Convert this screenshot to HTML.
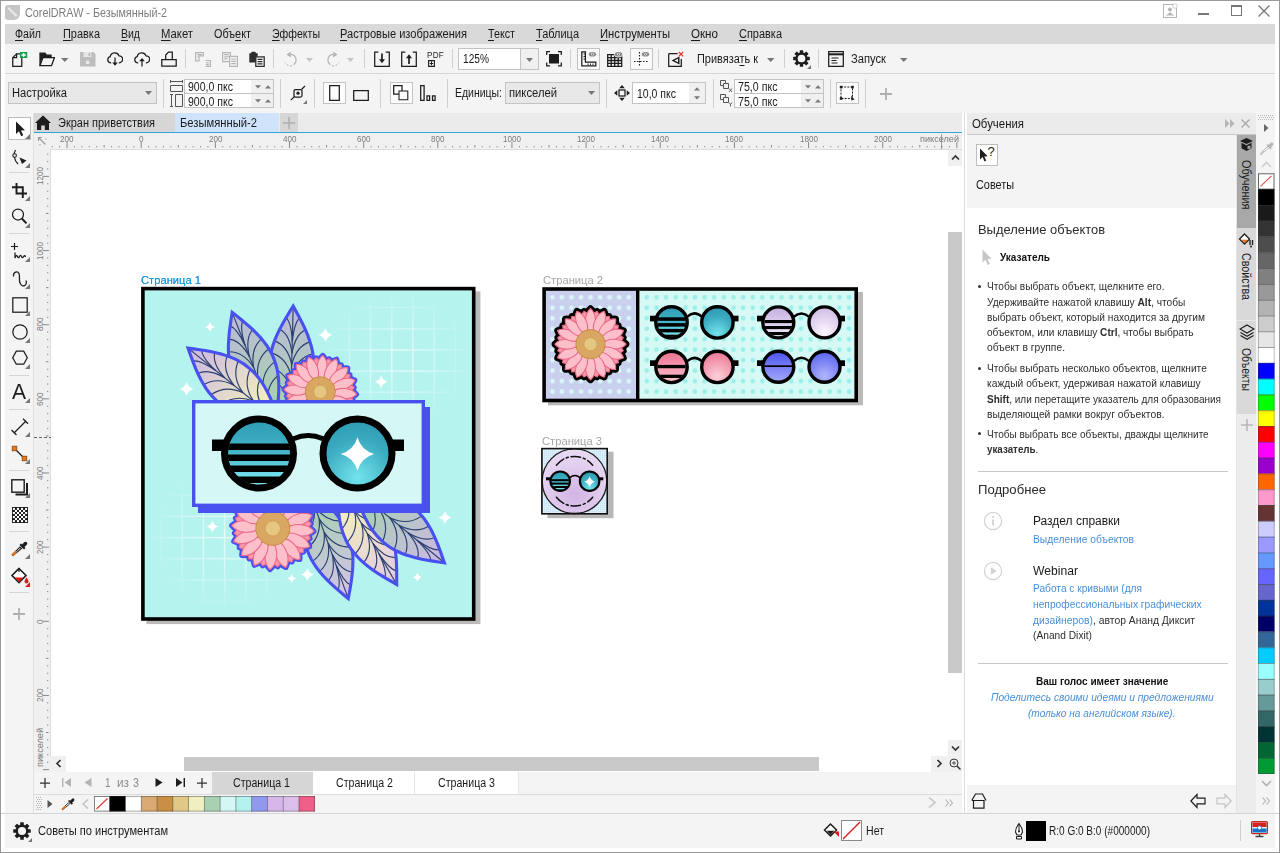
<!DOCTYPE html>
<html lang="ru"><head><meta charset="utf-8"><title>CorelDRAW - Безымянный-2</title><style>
html,body{margin:0;padding:0;}
body{width:1280px;height:853px;overflow:hidden;background:#fff;font-family:"Liberation Sans", sans-serif;position:relative;}
.a{position:absolute;display:block;}
.t{position:absolute;white-space:nowrap;display:block;}
u{text-decoration:underline;text-underline-offset:1.5px;}
</style></head>
<body>
<div class="a" style="left:0px;top:0px;width:1280px;height:853px;background:#ffffff;border:1px solid #9a9a9a;box-sizing:border-box;"></div>
<svg class="a" style="left:5px;top:5px;" width="15" height="15" viewBox="0 0 15 15"><path d="M3 0h12v9a6 6 0 0 1-6 6H3a3 3 0 0 1-3-3V3a3 3 0 0 1 3-3z" fill="#c6c6c6"/><path d="M4 3.5l7 7" stroke="#e9e9e9" stroke-width="2.2" stroke-linecap="round"/></svg>
<span class="t" style="left:25px;top:6.84px;font-size:12px;line-height:12px;color:#7d7d7d;transform-origin:0 0;transform:scaleX(0.8989);">CorelDRAW - Безымянный-2</span>
<svg class="a" style="left:1163px;top:3px;" width="16" height="16" viewBox="0 0 16 16"><rect x="0.5" y="1.5" width="13" height="13" fill="none" stroke="#b5b5b5"/><circle cx="7" cy="6.5" r="2" fill="#b5b5b5"/><path d="M2.5 12.5c1.5-1 3-1.2 3.6-3h1.8c.6 1.8 2.1 2 3.6 3z" fill="#b5b5b5"/><circle cx="12" cy="3" r="2.3" fill="#fff" stroke="#c5c5c5" stroke-width=".8"/></svg>
<div class="a" style="left:1198px;top:13px;width:11px;height:2px;background:#777;"></div>
<div class="a" style="left:1231px;top:5px;width:11px;height:11px;border:1px solid #777;box-sizing:border-box;border-top:2px solid #777;"></div>
<svg class="a" style="left:1258px;top:5px;" width="12" height="12" viewBox="0 0 12 12"><path d="M.5.5l11 11M11.500.5l-11 11" stroke="#777" stroke-width="1.3" fill="none"/></svg>
<div class="a" style="left:5px;top:24px;width:1270px;height:20px;background:#d9d9d9;"></div>
<span class="t" style="left:15px;top:27.84px;font-size:12px;line-height:12px;color:#1a1a1a;transform-origin:0 0;transform:scaleX(0.8809);"><u>Ф</u>айл</span>
<span class="t" style="left:63px;top:27.84px;font-size:12px;line-height:12px;color:#1a1a1a;transform-origin:0 0;transform:scaleX(0.9125);"><u>П</u>равка</span>
<span class="t" style="left:121px;top:27.84px;font-size:12px;line-height:12px;color:#1a1a1a;transform-origin:0 0;transform:scaleX(0.8742);"><u>В</u>ид</span>
<span class="t" style="left:161px;top:27.84px;font-size:12px;line-height:12px;color:#1a1a1a;transform-origin:0 0;transform:scaleX(0.9416);"><u>М</u>акет</span>
<span class="t" style="left:214px;top:27.84px;font-size:12px;line-height:12px;color:#1a1a1a;transform-origin:0 0;transform:scaleX(0.9049);">Объ<u>е</u>кт</span>
<span class="t" style="left:272px;top:27.84px;font-size:12px;line-height:12px;color:#1a1a1a;transform-origin:0 0;transform:scaleX(0.8797);"><u>Э</u>ффекты</span>
<span class="t" style="left:340px;top:27.84px;font-size:12px;line-height:12px;color:#1a1a1a;transform-origin:0 0;transform:scaleX(0.9227);"><u>Р</u>астровые изображения</span>
<span class="t" style="left:488px;top:27.84px;font-size:12px;line-height:12px;color:#1a1a1a;transform-origin:0 0;transform:scaleX(0.8935);"><u>Т</u>екст</span>
<span class="t" style="left:536px;top:27.84px;font-size:12px;line-height:12px;color:#1a1a1a;transform-origin:0 0;transform:scaleX(0.9137);"><u>Т</u>аблица</span>
<span class="t" style="left:600px;top:27.84px;font-size:12px;line-height:12px;color:#1a1a1a;transform-origin:0 0;transform:scaleX(0.9355);"><u>И</u>нструменты</span>
<span class="t" style="left:691px;top:27.84px;font-size:12px;line-height:12px;color:#1a1a1a;transform-origin:0 0;transform:scaleX(0.9675);"><u>О</u>кно</span>
<span class="t" style="left:739px;top:27.84px;font-size:12px;line-height:12px;color:#1a1a1a;transform-origin:0 0;transform:scaleX(0.9131);"><u>С</u>правка</span>
<div class="a" style="left:5px;top:44px;width:1270px;height:29px;background:#f4f4f4;"></div>
<div class="a" style="left:5px;top:73px;width:1270px;height:1px;background:#d5d5d5;"></div>
<div class="a" style="left:185px;top:49px;width:1px;height:19px;background:#d0d0d0;"></div>
<div class="a" style="left:273px;top:49px;width:1px;height:19px;background:#d0d0d0;"></div>
<div class="a" style="left:364px;top:49px;width:1px;height:19px;background:#d0d0d0;"></div>
<div class="a" style="left:452px;top:49px;width:1px;height:19px;background:#d0d0d0;"></div>
<div class="a" style="left:570px;top:49px;width:1px;height:19px;background:#d0d0d0;"></div>
<div class="a" style="left:658px;top:49px;width:1px;height:19px;background:#d0d0d0;"></div>
<div class="a" style="left:784px;top:49px;width:1px;height:19px;background:#d0d0d0;"></div>
<div class="a" style="left:818px;top:49px;width:1px;height:19px;background:#d0d0d0;"></div>
<svg class="a" style="left:12px;top:51px;" width="16" height="16" viewBox="0 0 16 16"><path d="M.75 6.600L4.600 2.750H9.750V15.250H.75z" fill="none" stroke="#1d1d1d" stroke-width="1.25"/><path d="M.75 6.600H4.600V2.750" fill="none" stroke="#1d1d1d" stroke-width="1.25" stroke-width="1.100"/><rect x="8" y="1" width="7.200" height="6" fill="#12a14b"/><path d="M11.600 2v4M9.400 4h4.400" stroke="#fff" stroke-width="1.400"/></svg>
<svg class="a" style="left:39px;top:51px;" width="16" height="16" viewBox="0 0 16 16"><path d="M1 14.500V2h5l1.500 2H12v2.500" fill="none" stroke="#1d1d1d" stroke-width="1.25"/><path d="M1 14.500l3-8h11.500l-3 8z" fill="none" stroke="#1d1d1d" stroke-width="1.25"/><path d="M1 2.200h4.800l1.500 2H12V6H4L1.200 13z" fill="#1d1d1d"/></svg>
<svg class="a" style="left:61px;top:57.5px;" width="8" height="4" viewBox="0 0 8 4"><path d="M0 0h7.500L3.750 4z" fill="#777"/></svg>
<svg class="a" style="left:80px;top:51px;" width="16" height="16" viewBox="0 0 16 16"><path d="M0 1h13.500L15.500 3v12.500H0z" fill="#bdbdbd"/><rect x="3.500" y="1" width="8" height="5" fill="#e6e6e6"/><rect x="8.500" y="2" width="2" height="3" fill="#bdbdbd"/><rect x="6" y="9.500" width="3.500" height="3.500" fill="#e6e6e6"/></svg>
<svg class="a" style="left:107px;top:51px;" width="16" height="16" viewBox="0 0 16 16"><path d="M4.200 11.800H3.600A3.100 3.100 0 0 1 3.200 5.700 4.600 4.600 0 0 1 12 4.800 3.500 3.500 0 0 1 12.300 11.800H11.800" fill="none" stroke="#1d1d1d" stroke-width="1.25"/><path d="M8 6.500V14" fill="none" stroke="#1d1d1d" stroke-width="1.25"/><path d="M5.200 11.500L8 14.800l2.800-3.300z" fill="#1d1d1d"/></svg>
<svg class="a" style="left:134px;top:51px;" width="16" height="16" viewBox="0 0 16 16"><path d="M4.200 11.800H3.600A3.100 3.100 0 0 1 3.200 5.700 4.600 4.600 0 0 1 12 4.800 3.500 3.500 0 0 1 12.300 11.800H11.800" fill="none" stroke="#1d1d1d" stroke-width="1.25"/><path d="M8 15.500V8" fill="none" stroke="#1d1d1d" stroke-width="1.25"/><path d="M5.200 10.300L8 7l2.800 3.300z" fill="#1d1d1d"/></svg>
<svg class="a" style="left:161px;top:51px;" width="16" height="16" viewBox="0 0 16 16"><path d="M4.700 8.500V4L7.500 1h3.800v7.500" fill="none" stroke="#1d1d1d" stroke-width="1.25"/><path d="M.8 8.700h14.400v6.500H.8z" fill="none" stroke="#1d1d1d" stroke-width="1.25" stroke-width="1.500"/><path d="M.8 11.200h14.400" stroke="#1d1d1d" stroke-width="0"/></svg>
<svg class="a" style="left:195px;top:51px;" width="16" height="16" viewBox="0 0 16 16"><path d="M.6 1.600h7.800v3.200H4v5H.6z" fill="none" stroke="#b4b4b4" stroke-width="1.200"/><path d="M2.300 3.600h4.500M2.300 6h1" fill="none" stroke="#b4b4b4" stroke-width="1.200" stroke-width="1"/><path d="M10.500 9.500h4.900v5.900H10.500" fill="none" stroke="#b4b4b4" stroke-width="1.200"/><path d="M11 11.800h2.800M11 13.600h2.800" fill="none" stroke="#b4b4b4" stroke-width="1.200" stroke-width="1"/></svg>
<svg class="a" style="left:222px;top:51px;" width="16" height="16" viewBox="0 0 16 16"><path d="M.6 1.600h7.800v9H.6z" fill="none" stroke="#b4b4b4" stroke-width="1.200"/><path d="M2.200 3.700h4.600M2.200 5.800h4.600M2.200 7.900h3" fill="none" stroke="#b4b4b4" stroke-width="1.200" stroke-width="1"/><path d="M7.600 5.400h7.800v10H7.600z" fill="#f4f4f4" stroke="#b4b4b4" stroke-width="1.200"/><path d="M9.200 8h4.600M9.200 10.300h4.600M9.200 12.600h4.600" fill="none" stroke="#b4b4b4" stroke-width="1.200" stroke-width="1"/></svg>
<svg class="a" style="left:249px;top:51px;" width="16" height="16" viewBox="0 0 16 16"><path d="M.3 2.200h8.400V11.500H.3z" fill="#2e2e2e"/><rect x="2.300" y=".8" width="4.400" height="2.400" rx=".8" fill="#2e2e2e"/><path d="M6.800 5.800h8.400v9.600H6.800z" fill="#f4f4f4" stroke="#2e2e2e" stroke-width="1.300"/><path d="M8.600 8.300h4.800M8.600 10.600h4.800M8.600 12.900h4.800" stroke="#2e2e2e" stroke-width="1.200"/></svg>
<svg class="a" style="left:283px;top:51px;" width="16" height="16" viewBox="0 0 16 16"><path d="M7.500 3.400A5.700 5.700 0 1 1 2.200 11.500" fill="none" stroke="#b4b4b4" stroke-width="1.200" stroke-dasharray="14 2 1.500 2 1.500 2 1.500 2" stroke-width="1.400"/><path d="M7.800 .8v5.600L3.300 3.600z" fill="#b4b4b4"/></svg>
<svg class="a" style="left:306px;top:57.5px;" width="8" height="4" viewBox="0 0 8 4"><path d="M0 0h7L3.500 4z" fill="#c4c4c4"/></svg>
<svg class="a" style="left:325px;top:51px;" width="16" height="16" viewBox="0 0 16 16"><path d="M8.500 3.400A5.700 5.700 0 1 0 13.800 11.500" fill="none" stroke="#b4b4b4" stroke-width="1.200" stroke-dasharray="14 2 1.500 2 1.500 2 1.500 2" stroke-width="1.400"/><path d="M8.200 .8v5.600l4.500-2.800z" fill="#b4b4b4"/></svg>
<svg class="a" style="left:347px;top:57.5px;" width="8" height="4" viewBox="0 0 8 4"><path d="M0 0h7L3.500 4z" fill="#c4c4c4"/></svg>
<svg class="a" style="left:374px;top:51px;" width="16" height="16" viewBox="0 0 16 16"><path d="M4.300 1.200H.7v14.100h14.600V1.200H11.700" fill="none" stroke="#1d1d1d" stroke-width="1.25" stroke-width="1.300"/><path d="M8 2.500v8" stroke="#1d1d1d" stroke-width="1.700"/><path d="M5 8.300L8 12.300l3-4z" fill="#1d1d1d"/></svg>
<svg class="a" style="left:401px;top:51px;" width="16" height="16" viewBox="0 0 16 16"><path d="M4.300 1.200H.7v14.100h14.600V1.200H11.700" fill="none" stroke="#1d1d1d" stroke-width="1.25" stroke-width="1.300"/><path d="M8 13V5" stroke="#1d1d1d" stroke-width="1.700"/><path d="M5 7.200L8 3.200l3 4z" fill="#1d1d1d"/></svg>
<span class="t" style="left:427px;top:50.500px;font-size:8.500px;line-height:8.500px;color:#1d1d1d;letter-spacing:0.3px;transform-origin:0 0;transform:scaleX(.95)">PDF</span>
<svg class="a" style="left:428px;top:60px;" width="7" height="7" viewBox="0 0 7 7"><path d="M.6 .6h5.800v5.800H.6z" fill="none" stroke="#1d1d1d" stroke-width="1.100"/><path d="M3.500 1.300v4M1.800 3.500h3.400" stroke="#1d1d1d" stroke-width="1" fill="none"/></svg>
<div class="a" style="left:458px;top:48px;width:81px;height:22px;background:#fff;border:1px solid #c3c3c3;box-sizing:border-box;"></div>
<div class="a" style="left:520px;top:49px;width:17px;height:20px;background:#f0f0f0;border-left:1px solid #c3c3c3;"></div>
<span class="t" style="left:462.5px;top:53.34px;font-size:12px;line-height:12px;color:#1a1a1a;transform-origin:0 0;transform:scaleX(0.8468);">125%</span>
<svg class="a" style="left:526px;top:57.5px;" width="8" height="4" viewBox="0 0 8 4"><path d="M0 0h7L3.500 4z" fill="#777"/></svg>
<svg class="a" style="left:546px;top:51px;" width="16" height="16" viewBox="0 0 16 16"><rect x="3" y="3" width="10" height="9.500" fill="#1d1d1d"/><path d="M.7 4V.7H4M12 .7h3.300V4M15.300 11.500v3.300H12M4 14.800H.7v-3.300" fill="none" stroke="#1d1d1d" stroke-width="1.25" stroke-width="1.200"/></svg>
<div class="a" style="left:577px;top:48px;width:23px;height:22px;background:#fafafa;border:1px solid #c3c3c3;box-sizing:border-box;"></div>
<svg class="a" style="left:581px;top:51px;" width="16" height="16" viewBox="0 0 16 16"><path d="M.8 .8h3.600v10.400h10.400v3.600H.8z" fill="none" stroke="#1d1d1d" stroke-width="1.25"/><path d="M2.500 3h1.500M2.500 5.500h1.500M2.500 8h1.500M7 12.500V14M9.500 12.500V14M12 12.500V14" stroke="#1d1d1d" stroke-width=".9"/><ellipse cx="11.500" cy="3.300" rx="3.700" ry="2.300" fill="#8c8c8c"/><ellipse cx="11.500" cy="3.300" rx="1.600" ry="1.100" fill="#e8e8e8"/><circle cx="11.500" cy="3.300" r=".6" fill="#666"/></svg>
<svg class="a" style="left:607px;top:51px;" width="16" height="16" viewBox="0 0 16 16"><path d="M.7 3.700h14v11.600H.7zM.7 6.600h14M.7 9.500h14M.7 12.400h14M4.200 3.700v11.600M7.700 3.700v11.600M11.200 3.700v11.600" fill="none" stroke="#1d1d1d" stroke-width="1.300"/><ellipse cx="11.500" cy="3.300" rx="4.500" ry="3.100" fill="#f4f4f4"/><ellipse cx="11.500" cy="3.300" rx="3.700" ry="2.300" fill="#8c8c8c"/><ellipse cx="11.500" cy="3.300" rx="1.600" ry="1.100" fill="#e8e8e8"/><circle cx="11.500" cy="3.300" r=".6" fill="#666"/></svg>
<div class="a" style="left:630px;top:48px;width:23px;height:22px;background:#fafafa;border:1px solid #c3c3c3;box-sizing:border-box;"></div>
<svg class="a" style="left:634px;top:51px;" width="16" height="16" viewBox="0 0 16 16"><path d="M5.500 1v14.500M0 10.500h15" stroke="#1d1d1d" stroke-width="1.100" stroke-dasharray="1.500 1.500"/><ellipse cx="11.500" cy="3.300" rx="3.700" ry="2.300" fill="#8c8c8c"/><ellipse cx="11.500" cy="3.300" rx="1.600" ry="1.100" fill="#e8e8e8"/><circle cx="11.500" cy="3.300" r=".6" fill="#666"/></svg>
<svg class="a" style="left:668px;top:51px;" width="16" height="16" viewBox="0 0 16 16"><path d="M.7 2.700h9M.7 2.700v12.600h12.600V8" fill="none" stroke="#1d1d1d" stroke-width="1.25"/><path d="M3.500 9.500l8-4v8z" fill="#1d1d1d"/><path d="M6.500 9.500l3.500-1.800v3.600z" fill="#f4f4f4"/><path d="M10.800 1l4.400 4.400M15.200 1l-4.400 4.400" stroke="#e0352b" stroke-width="1.200"/></svg>
<span class="t" style="left:697px;top:53.34px;font-size:12px;line-height:12px;color:#1a1a1a;transform-origin:0 0;transform:scaleX(0.9104);">Привяза<u>т</u>ь к</span>
<svg class="a" style="left:767px;top:57.5px;" width="8" height="4" viewBox="0 0 8 4"><path d="M0 0h7.500L3.750 4z" fill="#777"/></svg>
<svg class="a" style="left:793px;top:50px;" width="17" height="17" viewBox="0 0 17 17"><g transform="translate(8.500 8.500)"><rect x="-1.700" y="-8.300" width="3.400" height="3.600" rx=".5" transform="rotate(0)" fill="#1d1d1d"/><rect x="-1.700" y="-8.300" width="3.400" height="3.600" rx=".5" transform="rotate(45)" fill="#1d1d1d"/><rect x="-1.700" y="-8.300" width="3.400" height="3.600" rx=".5" transform="rotate(90)" fill="#1d1d1d"/><rect x="-1.700" y="-8.300" width="3.400" height="3.600" rx=".5" transform="rotate(135)" fill="#1d1d1d"/><rect x="-1.700" y="-8.300" width="3.400" height="3.600" rx=".5" transform="rotate(180)" fill="#1d1d1d"/><rect x="-1.700" y="-8.300" width="3.400" height="3.600" rx=".5" transform="rotate(225)" fill="#1d1d1d"/><rect x="-1.700" y="-8.300" width="3.400" height="3.600" rx=".5" transform="rotate(270)" fill="#1d1d1d"/><rect x="-1.700" y="-8.300" width="3.400" height="3.600" rx=".5" transform="rotate(315)" fill="#1d1d1d"/><circle r="5" fill="none" stroke="#1d1d1d" stroke-width="2.300"/></g></svg>
<svg class="a" style="left:807px;top:65px;" width="4" height="4" viewBox="0 0 4 4"><path d="M4 0v4H0z" fill="#777"/></svg>
<svg class="a" style="left:828px;top:51px;" width="16" height="16" viewBox="0 0 16 16"><path d="M.7 .7h14.600v14.600H.7z" fill="none" stroke="#1d1d1d" stroke-width="1.25"/><path d="M.7 3.300h14.600" stroke="#1d1d1d" stroke-width="2"/><path d="M3.500 7h7M3.500 9.500h5M3.500 12h6" stroke="#1d1d1d" stroke-width="1.100"/></svg>
<span class="t" style="left:851px;top:53.34px;font-size:12px;line-height:12px;color:#1a1a1a;transform-origin:0 0;transform:scaleX(0.9322);">Запуск</span>
<svg class="a" style="left:900px;top:57.5px;" width="8" height="4" viewBox="0 0 8 4"><path d="M0 0h7.500L3.750 4z" fill="#777"/></svg>
<div class="a" style="left:5px;top:74px;width:1270px;height:39px;background:#f4f4f4;"></div>
<div class="a" style="left:163px;top:79px;width:1px;height:29px;background:#d0d0d0;"></div>
<div class="a" style="left:280px;top:79px;width:1px;height:29px;background:#d0d0d0;"></div>
<div class="a" style="left:314px;top:79px;width:1px;height:29px;background:#d0d0d0;"></div>
<div class="a" style="left:380px;top:79px;width:1px;height:29px;background:#d0d0d0;"></div>
<div class="a" style="left:447px;top:79px;width:1px;height:29px;background:#d0d0d0;"></div>
<div class="a" style="left:606px;top:79px;width:1px;height:29px;background:#d0d0d0;"></div>
<div class="a" style="left:713px;top:79px;width:1px;height:29px;background:#d0d0d0;"></div>
<div class="a" style="left:830px;top:79px;width:1px;height:29px;background:#d0d0d0;"></div>
<div class="a" style="left:865px;top:79px;width:1px;height:29px;background:#d0d0d0;"></div>
<div class="a" style="left:8px;top:82px;width:149px;height:22px;background:#e8e8e8;border:1px solid #c3c3c3;box-sizing:border-box;"></div>
<span class="t" style="left:12px;top:87.34px;font-size:12px;line-height:12px;color:#1a1a1a;transform-origin:0 0;transform:scaleX(0.9310);">Настройка</span>
<svg class="a" style="left:145px;top:91px;" width="8" height="4" viewBox="0 0 8 4"><path d="M0 0h7L3.500 4z" fill="#777"/></svg>
<svg class="a" style="left:170px;top:80px;" width="13" height="12" viewBox="0 0 13 12"><path d="M.5 1.500h12M.5 0v3M12.500 0v3" fill="none" stroke="#555" stroke-width="1"/><path d="M.5 5.500h12v6H.5z" fill="none" stroke="#555" stroke-width="1"/></svg>
<svg class="a" style="left:170px;top:94px;" width="13" height="13" viewBox="0 0 13 13"><path d="M1.500 .5v12M0 .5h3M0 12.500h3" fill="none" stroke="#555" stroke-width="1"/><path d="M5.500 .5h7v12h-7z" fill="none" stroke="#555" stroke-width="1"/></svg>
<div class="a" style="left:184px;top:79px;width:90px;height:15px;background:#fff;border:1px solid #c3c3c3;box-sizing:border-box;"></div>
<div class="a" style="left:184px;top:93px;width:90px;height:15px;background:#fff;border:1px solid #c3c3c3;box-sizing:border-box;"></div>
<div class="a" style="left:251px;top:80px;width:22px;height:13px;background:#f0f0f0;"></div>
<div class="a" style="left:251px;top:94px;width:22px;height:13px;background:#f0f0f0;"></div>
<svg class="a" style="left:255px;top:84.5px;" width="6" height="4" viewBox="0 0 6 4"><path d="M0 .3h6L3 3.600z" fill="#777"/></svg>
<svg class="a" style="left:265px;top:84.5px;" width="6" height="4" viewBox="0 0 6 4"><path d="M0 3.600h6L3 .3z" fill="#777"/></svg>
<svg class="a" style="left:255px;top:98.5px;" width="6" height="4" viewBox="0 0 6 4"><path d="M0 .3h6L3 3.600z" fill="#777"/></svg>
<svg class="a" style="left:265px;top:98.5px;" width="6" height="4" viewBox="0 0 6 4"><path d="M0 3.600h6L3 .3z" fill="#777"/></svg>
<span class="t" style="left:188px;top:81.24px;font-size:12px;line-height:12px;color:#1a1a1a;transform-origin:0 0;transform:scaleX(0.8780);">900,0 пкс</span>
<span class="t" style="left:188px;top:96.24px;font-size:12px;line-height:12px;color:#1a1a1a;transform-origin:0 0;transform:scaleX(0.8780);">900,0 пкс</span>
<svg class="a" style="left:290px;top:85px;" width="16" height="16" viewBox="0 0 16 16"><rect x="4" y="4.500" width="8" height="7.500" rx="1.500" fill="none" stroke="#1d1d1d" stroke-width="1.25" stroke-width="1.200"/><circle cx="8" cy="8.200" r="1.600" fill="#1d1d1d"/><path d="M.8 15.200L4.500 11.500M11.500 4.500L15 1" stroke="#1d1d1d" stroke-width="1.200"/></svg>
<svg class="a" style="left:303px;top:100px;" width="4" height="4" viewBox="0 0 4 4"><path d="M4 0v4H0z" fill="#777"/></svg>
<div class="a" style="left:323px;top:82px;width:23px;height:22px;background:#fdfdfd;border:1px solid #c3c3c3;box-sizing:border-box;"></div>
<svg class="a" style="left:329px;top:85px;" width="11" height="16" viewBox="0 0 11 16"><path d="M.7 .7h9.600v14.600H.7z" fill="none" stroke="#1d1d1d" stroke-width="1.25" stroke-width="1.100"/></svg>
<svg class="a" style="left:353px;top:90px;" width="16" height="11" viewBox="0 0 16 11"><path d="M.7 .7h14.600v9.600H.7z" fill="none" stroke="#1d1d1d" stroke-width="1.25" stroke-width="1.100"/></svg>
<div class="a" style="left:390px;top:82px;width:23px;height:22px;background:#fdfdfd;border:1px solid #c3c3c3;box-sizing:border-box;"></div>
<svg class="a" style="left:393px;top:85px;" width="16" height="16" viewBox="0 0 16 16"><path d="M.7 .7h8.300v8.300H.7z" fill="none" stroke="#1d1d1d" stroke-width="1.25" stroke-width="1.050"/><path d="M6 6h8.800v8.800H6z" fill="#fdfdfd" stroke="#1d1d1d" stroke-width="1.050"/></svg>
<svg class="a" style="left:420px;top:85px;" width="16" height="16" viewBox="0 0 16 16"><path d="M.7 .7h3.400v14.600H.7zM7 10.800h2.600v4.500H7zM12.500 10.800h2.600v4.500h-2.600z" fill="none" stroke="#1d1d1d" stroke-width="1.25" stroke-width="1.050"/></svg>
<span class="t" style="left:455px;top:87.34px;font-size:12px;line-height:12px;color:#1a1a1a;transform-origin:0 0;transform:scaleX(0.8724);">Единицы:</span>
<div class="a" style="left:505px;top:82px;width:95px;height:22px;background:#e8e8e8;border:1px solid #c3c3c3;box-sizing:border-box;"></div>
<span class="t" style="left:509px;top:87.34px;font-size:12px;line-height:12px;color:#1a1a1a;transform-origin:0 0;transform:scaleX(0.9366);">пикселей</span>
<svg class="a" style="left:588px;top:91px;" width="8" height="4" viewBox="0 0 8 4"><path d="M0 0h7L3.500 4z" fill="#777"/></svg>
<svg class="a" style="left:614px;top:85px;" width="16" height="16" viewBox="0 0 16 16"><rect x="5" y="5" width="6" height="6" fill="none" stroke="#1d1d1d" stroke-width="1.25" stroke-width="1.200"/><path d="M8 0l2.800 3.300H5.200zM8 16l2.800-3.300H5.200zM0 8l3.300-2.800v5.600zM16 8l-3.300-2.800v5.600z" fill="#1d1d1d"/></svg>
<div class="a" style="left:632px;top:82px;width:74px;height:22px;background:#fff;border:1px solid #c3c3c3;box-sizing:border-box;"></div>
<div class="a" style="left:689px;top:83px;width:16px;height:20px;background:#f0f0f0;"></div>
<svg class="a" style="left:694px;top:87px;" width="6" height="4" viewBox="0 0 6 4"><path d="M0 3.600h6L3 .3z" fill="#777"/></svg>
<svg class="a" style="left:694px;top:96px;" width="6" height="4" viewBox="0 0 6 4"><path d="M0 .3h6L3 3.600z" fill="#777"/></svg>
<span class="t" style="left:636.5px;top:87.84px;font-size:12px;line-height:12px;color:#1a1a1a;transform-origin:0 0;transform:scaleX(0.8749);">10,0 пкс</span>
<svg class="a" style="left:720px;top:80px;" width="13" height="13" viewBox="0 0 13 13"><path d="M.5 .5h5v5h-5z" fill="none" stroke="#555" stroke-width="1"/><path d="M3.500 3.500h5v5h-5z" fill="#f4f4f4" stroke="#555"/><path d="M9 8.500l3 3.500M12 8.500l-3 3.500" stroke="#555" stroke-width=".9" fill="none"/></svg>
<svg class="a" style="left:720px;top:94px;" width="13" height="13" viewBox="0 0 13 13"><path d="M.5 .5h5v5h-5z" fill="none" stroke="#555" stroke-width="1"/><path d="M3.500 3.500h5v5h-5z" fill="#f4f4f4" stroke="#555"/><path d="M9 8.500l1.500 2 1.500-2M10.500 10.500v2" stroke="#555" stroke-width=".9" fill="none"/></svg>
<div class="a" style="left:734px;top:79px;width:90px;height:15px;background:#fff;border:1px solid #c3c3c3;box-sizing:border-box;"></div>
<div class="a" style="left:734px;top:93px;width:90px;height:15px;background:#fff;border:1px solid #c3c3c3;box-sizing:border-box;"></div>
<div class="a" style="left:801px;top:80px;width:22px;height:13px;background:#f0f0f0;"></div>
<div class="a" style="left:801px;top:94px;width:22px;height:13px;background:#f0f0f0;"></div>
<svg class="a" style="left:805px;top:84.5px;" width="6" height="4" viewBox="0 0 6 4"><path d="M0 .3h6L3 3.600z" fill="#777"/></svg>
<svg class="a" style="left:815px;top:84.5px;" width="6" height="4" viewBox="0 0 6 4"><path d="M0 3.600h6L3 .3z" fill="#777"/></svg>
<svg class="a" style="left:805px;top:98.5px;" width="6" height="4" viewBox="0 0 6 4"><path d="M0 .3h6L3 3.600z" fill="#777"/></svg>
<svg class="a" style="left:815px;top:98.5px;" width="6" height="4" viewBox="0 0 6 4"><path d="M0 3.600h6L3 .3z" fill="#777"/></svg>
<span class="t" style="left:738px;top:81.24px;font-size:12px;line-height:12px;color:#1a1a1a;transform-origin:0 0;transform:scaleX(0.8861);">75,0 пкс</span>
<span class="t" style="left:738px;top:96.24px;font-size:12px;line-height:12px;color:#1a1a1a;transform-origin:0 0;transform:scaleX(0.8861);">75,0 пкс</span>
<div class="a" style="left:836px;top:82px;width:23px;height:22px;background:#fdfdfd;border:1px solid #c3c3c3;box-sizing:border-box;"></div>
<svg class="a" style="left:839px;top:85px;" width="16" height="16" viewBox="0 0 16 16"><path d="M2 2h11.500v11.500H2z" fill="none" stroke="#1d1d1d" stroke-width="1" stroke-dasharray="2 1.200"/><rect x=".8" y=".8" width="2.600" height="2.600" fill="#1d1d1d"/><rect x="12.200" y=".8" width="2.600" height="2.600" fill="#1d1d1d"/><rect x=".8" y="12.200" width="2.600" height="2.600" fill="#1d1d1d"/><path d="M12.300 10.500l3.200 4.300-1.600.1-1.600.6z" fill="#1d1d1d"/></svg>
<svg class="a" style="left:880px;top:88px;" width="12" height="12" viewBox="0 0 12 12"><path d="M6 0v12M0 6h12" stroke="#b0b0b0" stroke-width="1.800"/></svg>
<div class="a" style="left:5px;top:113px;width:28px;height:700px;background:#f4f4f4;"></div>
<div class="a" style="left:33px;top:113px;width:1px;height:700px;background:#e0e0e0;"></div>
<div class="a" style="left:8px;top:117px;width:23px;height:23px;background:#fff;border:1px solid #bdbdbd;box-sizing:border-box;"></div>
<svg class="a" style="left:15px;top:121px;" width="10" height="16" viewBox="0 0 10 16"><path d="M1 .5v12.500l3-2.800 2.200 5 2-.9-2.200-4.900 4-.2z" fill="#1d1d1d"/></svg>
<svg class="a" style="left:25px;top:134px;" width="5" height="5" viewBox="0 0 5 5"><path d="M5 0v5H0z" fill="#777"/></svg>
<svg class="a" style="left:11px;top:149px;" width="18" height="17" viewBox="0 0 18 17"><path d="M4.500 1c-2.500 4-1.500 10 2.500 14" fill="none" stroke="#1d1d1d" stroke-width="1.25" stroke-width="1.200"/><circle cx="3.600" cy="6.500" r="1.800" fill="#f4f4f4" stroke="#1d1d1d" stroke-width="1.100"/><path d="M8.500 8.500l7 3-4.500 3.500z" fill="#1d1d1d"/></svg>
<svg class="a" style="left:25px;top:163px;" width="5" height="5" viewBox="0 0 5 5"><path d="M5 0v5H0z" fill="#777"/></svg>
<div class="a" style="left:9px;top:172px;width:20px;height:1px;background:#d5d5d5;"></div>
<div class="a" style="left:9px;top:233px;width:20px;height:1px;background:#d5d5d5;"></div>
<div class="a" style="left:9px;top:375px;width:20px;height:1px;background:#d5d5d5;"></div>
<div class="a" style="left:9px;top:409px;width:20px;height:1px;background:#d5d5d5;"></div>
<div class="a" style="left:9px;top:470px;width:20px;height:1px;background:#d5d5d5;"></div>
<div class="a" style="left:9px;top:531px;width:20px;height:1px;background:#d5d5d5;"></div>
<div class="a" style="left:9px;top:592px;width:20px;height:1px;background:#d5d5d5;"></div>
<svg class="a" style="left:12px;top:183px;" width="15" height="15" viewBox="0 0 15 15"><path d="M4.500 0v10.500H15M0 4.200h10.800V15" fill="none" stroke="#1d1d1d" stroke-width="1.900"/></svg>
<svg class="a" style="left:25px;top:196px;" width="5" height="5" viewBox="0 0 5 5"><path d="M5 0v5H0z" fill="#777"/></svg>
<svg class="a" style="left:11px;top:208px;" width="18" height="18" viewBox="0 0 18 18"><circle cx="7" cy="6.500" r="5.500" fill="none" stroke="#1d1d1d" stroke-width="1.25" stroke-width="1.400"/><path d="M10.800 10.500l4.700 4.900" stroke="#1d1d1d" stroke-width="2"/></svg>
<svg class="a" style="left:25px;top:223px;" width="5" height="5" viewBox="0 0 5 5"><path d="M5 0v5H0z" fill="#777"/></svg>
<svg class="a" style="left:11px;top:243px;" width="18" height="17" viewBox="0 0 18 17"><path d="M3.500 0v7M0 3.500h7" stroke="#1d1d1d" stroke-width="1.200"/><path d="M4 9.500v5.500c1-3 2-3 2.500-1.500s1.500 1.500 2 0 1.500-1.500 2 0 1.500 1.500 2.200 0 1.500-1 1.800.5" fill="none" stroke="#1d1d1d" stroke-width="1.25" stroke-width="1.200"/></svg>
<svg class="a" style="left:25px;top:257px;" width="5" height="5" viewBox="0 0 5 5"><path d="M5 0v5H0z" fill="#777"/></svg>
<svg class="a" style="left:12px;top:270px;" width="16" height="18" viewBox="0 0 16 18"><path d="M1.500 6.500C1 2 5.500 .5 7 3.500s-1 6.500 1.500 10.500 7 1 5.500-3.500" fill="none" stroke="#1d1d1d" stroke-width="1.25" stroke-width="2"/></svg>
<svg class="a" style="left:25px;top:284px;" width="5" height="5" viewBox="0 0 5 5"><path d="M5 0v5H0z" fill="#777"/></svg>
<svg class="a" style="left:12px;top:297px;" width="16" height="16" viewBox="0 0 16 16"><rect x=".8" y=".8" width="14.400" height="14.400" fill="none" stroke="#1d1d1d" stroke-width="1.25" stroke-width="1.500"/></svg>
<svg class="a" style="left:25px;top:311px;" width="5" height="5" viewBox="0 0 5 5"><path d="M5 0v5H0z" fill="#777"/></svg>
<svg class="a" style="left:12px;top:324px;" width="16" height="16" viewBox="0 0 16 16"><circle cx="8" cy="8" r="7.200" fill="none" stroke="#1d1d1d" stroke-width="1.25" stroke-width="1.500"/></svg>
<svg class="a" style="left:25px;top:338px;" width="5" height="5" viewBox="0 0 5 5"><path d="M5 0v5H0z" fill="#777"/></svg>
<svg class="a" style="left:12px;top:350px;" width="16" height="16" viewBox="0 0 16 16"><path d="M4.300 1.200h7.400L15.300 7.700l-3.600 6.500H4.300L.7 7.700z" fill="none" stroke="#1d1d1d" stroke-width="1.25" stroke-width="1.300"/></svg>
<svg class="a" style="left:25px;top:364px;" width="5" height="5" viewBox="0 0 5 5"><path d="M5 0v5H0z" fill="#777"/></svg>
<span class="t" style="left:11.500px;top:382.300px;font-size:21.500px;line-height:21.500px;color:#1d1d1d;transform-origin:0 0;transform:scaleX(.98)">A</span>
<svg class="a" style="left:25px;top:398px;" width="5" height="5" viewBox="0 0 5 5"><path d="M5 0v5H0z" fill="#777"/></svg>
<svg class="a" style="left:11px;top:418px;" width="18" height="18" viewBox="0 0 18 18"><path d="M3 15L15 3" fill="none" stroke="#1d1d1d" stroke-width="1.25" stroke-width="1.300"/><path d="M.5 12l5 5M12 .8l5 5" fill="none" stroke="#1d1d1d" stroke-width="1.25" stroke-width="1.300"/></svg>
<svg class="a" style="left:25px;top:432px;" width="5" height="5" viewBox="0 0 5 5"><path d="M5 0v5H0z" fill="#777"/></svg>
<svg class="a" style="left:11px;top:445px;" width="18" height="18" viewBox="0 0 18 18"><path d="M4 4l10 10" fill="none" stroke="#1d1d1d" stroke-width="1.25" stroke-width="1.600"/><rect x="1.200" y="1.200" width="4.600" height="4.600" fill="#e8761d" stroke="#8a4510" stroke-width=".8"/><rect x="11.200" y="11.200" width="4.600" height="4.600" fill="#e8761d" stroke="#8a4510" stroke-width=".8"/></svg>
<svg class="a" style="left:25px;top:459px;" width="5" height="5" viewBox="0 0 5 5"><path d="M5 0v5H0z" fill="#777"/></svg>
<svg class="a" style="left:11px;top:479px;" width="18" height="18" viewBox="0 0 18 18"><path d="M4.500 15.500h11.500V4" stroke="#1d1d1d" stroke-width="2" fill="none"/><rect x=".8" y=".8" width="12.400" height="12.400" fill="#f4f4f4" stroke="#1d1d1d" stroke-width="1.400"/></svg>
<svg class="a" style="left:25px;top:493px;" width="5" height="5" viewBox="0 0 5 5"><path d="M5 0v5H0z" fill="#777"/></svg>
<svg class="a" style="left:12px;top:507px;" width="16" height="16" viewBox="0 0 16 16"><rect width="16" height="16" fill="#1d1d1d"/><rect x="0.90" y="0.90" width="2.030" height="2.030" fill="#fff"/><rect x="0.90" y="4.96" width="2.030" height="2.030" fill="#fff"/><rect x="0.90" y="9.02" width="2.030" height="2.030" fill="#fff"/><rect x="0.90" y="13.08" width="2.030" height="2.030" fill="#fff"/><rect x="2.93" y="2.93" width="2.030" height="2.030" fill="#fff"/><rect x="2.93" y="6.99" width="2.030" height="2.030" fill="#fff"/><rect x="2.93" y="11.05" width="2.030" height="2.030" fill="#fff"/><rect x="4.96" y="0.90" width="2.030" height="2.030" fill="#fff"/><rect x="4.96" y="4.96" width="2.030" height="2.030" fill="#fff"/><rect x="4.96" y="9.02" width="2.030" height="2.030" fill="#fff"/><rect x="4.96" y="13.08" width="2.030" height="2.030" fill="#fff"/><rect x="6.99" y="2.93" width="2.030" height="2.030" fill="#fff"/><rect x="6.99" y="6.99" width="2.030" height="2.030" fill="#fff"/><rect x="6.99" y="11.05" width="2.030" height="2.030" fill="#fff"/><rect x="9.02" y="0.90" width="2.030" height="2.030" fill="#fff"/><rect x="9.02" y="4.96" width="2.030" height="2.030" fill="#fff"/><rect x="9.02" y="9.02" width="2.030" height="2.030" fill="#fff"/><rect x="9.02" y="13.08" width="2.030" height="2.030" fill="#fff"/><rect x="11.05" y="2.93" width="2.030" height="2.030" fill="#fff"/><rect x="11.05" y="6.99" width="2.030" height="2.030" fill="#fff"/><rect x="11.05" y="11.05" width="2.030" height="2.030" fill="#fff"/><rect x="13.08" y="0.90" width="2.030" height="2.030" fill="#fff"/><rect x="13.08" y="4.96" width="2.030" height="2.030" fill="#fff"/><rect x="13.08" y="9.02" width="2.030" height="2.030" fill="#fff"/><rect x="13.08" y="13.08" width="2.030" height="2.030" fill="#fff"/></svg>
<svg class="a" style="left:11px;top:540px;" width="17" height="17" viewBox="0 0 17 17"><path d="M2 15.500l-.8-.8L9 7l1.500 1.500z" fill="#fff" stroke="#1d1d1d" stroke-width="1.100"/><path d="M1 16l.3-2.200L4.500 10.500l1.500 1.500L3 15.500z" fill="#e8761d"/><path d="M8.500 5l1.500-1.500 1 1L13.500 2a1.800 1.800 0 0 1 2.500 2.500L13.500 7l1 1L13 9.500z" fill="#1d1d1d"/></svg>
<svg class="a" style="left:25px;top:554px;" width="5" height="5" viewBox="0 0 5 5"><path d="M5 0v5H0z" fill="#777"/></svg>
<svg class="a" style="left:10px;top:567px;" width="20" height="19" viewBox="0 0 20 19"><path d="M9 1.500l7 7-7 7-7-7z" fill="#fff" stroke="#1d1d1d" stroke-width="1.600"/><path d="M4.500 10.500h9L9 15z" fill="#d9201c"/><path d="M9 1v4" stroke="#1d1d1d" stroke-width="1.300"/><path d="M16.500 10.500c1.500 2 2 3 2 4a2 2 0 0 1-4 0c0-1 .5-2 2-4z" fill="#d9201c"/></svg>
<svg class="a" style="left:25px;top:582px;" width="5" height="5" viewBox="0 0 5 5"><path d="M5 0v5H0z" fill="#d9201c"/></svg>
<svg class="a" style="left:13px;top:608px;" width="12" height="12" viewBox="0 0 12 12"><path d="M6 0v12M0 6h12" stroke="#b0b0b0" stroke-width="1.800"/></svg>
<div class="a" style="left:34px;top:113px;width:928px;height:19px;background:#ebebeb;"></div>
<div class="a" style="left:34px;top:113px;width:141px;height:19px;background:#d6d6d6;"></div>
<div class="a" style="left:175px;top:113px;width:104px;height:19px;background:#cfe4fb;"></div>
<div class="a" style="left:280px;top:113px;width:18px;height:19px;background:#d6d6d6;"></div>
<div class="a" style="left:34px;top:132px;width:928px;height:1px;background:#2ea5de;"></div>
<svg class="a" style="left:35px;top:115px;" width="16" height="15" viewBox="0 0 16 15"><path d="M8 .5L0 8h2v7h4.200v-4.500h3.600V15H14V8h2z" fill="#1d1d1d"/></svg>
<span class="t" style="left:58px;top:117.34px;font-size:12px;line-height:12px;color:#1a1a1a;transform-origin:0 0;transform:scaleX(0.9150);">Экран приветствия</span>
<span class="t" style="left:180px;top:117.34px;font-size:12px;line-height:12px;color:#1a1a1a;transform-origin:0 0;transform:scaleX(0.9342);">Безымянный-2</span>
<svg class="a" style="left:283px;top:117px;" width="12" height="12" viewBox="0 0 12 12"><path d="M6 0v12M0 6h12" stroke="#b0b0b0" stroke-width="1.600"/></svg>
<div class="a" style="left:34px;top:133px;width:928px;height:17px;background:#f0f0f0;"></div>
<div class="a" style="left:34px;top:150px;width:16px;height:622px;background:#f0f0f0;"></div>
<div class="a" style="left:50px;top:149px;width:912px;height:1px;background:#dcdcdc;"></div>
<div class="a" style="left:50px;top:150px;width:1px;height:606px;background:#dcdcdc;"></div>
<svg class="a" style="left:34px;top:133px;" width="928" height="17" viewBox="0 0 928 17"><rect x="17.72" y="13" width="1" height="1.300" fill="#8a8a8a"/><rect x="25.13" y="13" width="1" height="1.300" fill="#8a8a8a"/><rect x="32.55" y="9" width="1" height="6" fill="#8a8a8a"/><rect x="39.96" y="13" width="1" height="1.300" fill="#8a8a8a"/><rect x="47.38" y="13" width="1" height="1.300" fill="#8a8a8a"/><rect x="54.79" y="13" width="1" height="1.300" fill="#8a8a8a"/><rect x="62.21" y="13" width="1" height="1.300" fill="#8a8a8a"/><rect x="69.62" y="12" width="1" height="2.500" fill="#8a8a8a"/><rect x="77.04" y="13" width="1" height="1.300" fill="#8a8a8a"/><rect x="84.45" y="13" width="1" height="1.300" fill="#8a8a8a"/><rect x="91.87" y="13" width="1" height="1.300" fill="#8a8a8a"/><rect x="99.28" y="13" width="1" height="1.300" fill="#8a8a8a"/><rect x="106.70" y="9" width="1" height="6" fill="#8a8a8a"/><rect x="114.11" y="13" width="1" height="1.300" fill="#8a8a8a"/><rect x="121.53" y="13" width="1" height="1.300" fill="#8a8a8a"/><rect x="128.94" y="13" width="1" height="1.300" fill="#8a8a8a"/><rect x="136.36" y="13" width="1" height="1.300" fill="#8a8a8a"/><rect x="143.77" y="12" width="1" height="2.500" fill="#8a8a8a"/><rect x="151.19" y="13" width="1" height="1.300" fill="#8a8a8a"/><rect x="158.60" y="13" width="1" height="1.300" fill="#8a8a8a"/><rect x="166.02" y="13" width="1" height="1.300" fill="#8a8a8a"/><rect x="173.44" y="13" width="1" height="1.300" fill="#8a8a8a"/><rect x="180.85" y="9" width="1" height="6" fill="#8a8a8a"/><rect x="188.26" y="13" width="1" height="1.300" fill="#8a8a8a"/><rect x="195.68" y="13" width="1" height="1.300" fill="#8a8a8a"/><rect x="203.09" y="13" width="1" height="1.300" fill="#8a8a8a"/><rect x="210.51" y="13" width="1" height="1.300" fill="#8a8a8a"/><rect x="217.93" y="12" width="1" height="2.500" fill="#8a8a8a"/><rect x="225.34" y="13" width="1" height="1.300" fill="#8a8a8a"/><rect x="232.75" y="13" width="1" height="1.300" fill="#8a8a8a"/><rect x="240.17" y="13" width="1" height="1.300" fill="#8a8a8a"/><rect x="247.59" y="13" width="1" height="1.300" fill="#8a8a8a"/><rect x="255.00" y="9" width="1" height="6" fill="#8a8a8a"/><rect x="262.41" y="13" width="1" height="1.300" fill="#8a8a8a"/><rect x="269.83" y="13" width="1" height="1.300" fill="#8a8a8a"/><rect x="277.25" y="13" width="1" height="1.300" fill="#8a8a8a"/><rect x="284.66" y="13" width="1" height="1.300" fill="#8a8a8a"/><rect x="292.07" y="12" width="1" height="2.500" fill="#8a8a8a"/><rect x="299.49" y="13" width="1" height="1.300" fill="#8a8a8a"/><rect x="306.90" y="13" width="1" height="1.300" fill="#8a8a8a"/><rect x="314.32" y="13" width="1" height="1.300" fill="#8a8a8a"/><rect x="321.74" y="13" width="1" height="1.300" fill="#8a8a8a"/><rect x="329.15" y="9" width="1" height="6" fill="#8a8a8a"/><rect x="336.56" y="13" width="1" height="1.300" fill="#8a8a8a"/><rect x="343.98" y="13" width="1" height="1.300" fill="#8a8a8a"/><rect x="351.39" y="13" width="1" height="1.300" fill="#8a8a8a"/><rect x="358.81" y="13" width="1" height="1.300" fill="#8a8a8a"/><rect x="366.23" y="12" width="1" height="2.500" fill="#8a8a8a"/><rect x="373.64" y="13" width="1" height="1.300" fill="#8a8a8a"/><rect x="381.06" y="13" width="1" height="1.300" fill="#8a8a8a"/><rect x="388.47" y="13" width="1" height="1.300" fill="#8a8a8a"/><rect x="395.88" y="13" width="1" height="1.300" fill="#8a8a8a"/><rect x="403.30" y="9" width="1" height="6" fill="#8a8a8a"/><rect x="410.72" y="13" width="1" height="1.300" fill="#8a8a8a"/><rect x="418.13" y="13" width="1" height="1.300" fill="#8a8a8a"/><rect x="425.55" y="13" width="1" height="1.300" fill="#8a8a8a"/><rect x="432.96" y="13" width="1" height="1.300" fill="#8a8a8a"/><rect x="440.38" y="12" width="1" height="2.500" fill="#8a8a8a"/><rect x="447.79" y="13" width="1" height="1.300" fill="#8a8a8a"/><rect x="455.20" y="13" width="1" height="1.300" fill="#8a8a8a"/><rect x="462.62" y="13" width="1" height="1.300" fill="#8a8a8a"/><rect x="470.04" y="13" width="1" height="1.300" fill="#8a8a8a"/><rect x="477.45" y="9" width="1" height="6" fill="#8a8a8a"/><rect x="484.87" y="13" width="1" height="1.300" fill="#8a8a8a"/><rect x="492.28" y="13" width="1" height="1.300" fill="#8a8a8a"/><rect x="499.69" y="13" width="1" height="1.300" fill="#8a8a8a"/><rect x="507.11" y="13" width="1" height="1.300" fill="#8a8a8a"/><rect x="514.53" y="12" width="1" height="2.500" fill="#8a8a8a"/><rect x="521.94" y="13" width="1" height="1.300" fill="#8a8a8a"/><rect x="529.36" y="13" width="1" height="1.300" fill="#8a8a8a"/><rect x="536.77" y="13" width="1" height="1.300" fill="#8a8a8a"/><rect x="544.18" y="13" width="1" height="1.300" fill="#8a8a8a"/><rect x="551.60" y="9" width="1" height="6" fill="#8a8a8a"/><rect x="559.02" y="13" width="1" height="1.300" fill="#8a8a8a"/><rect x="566.43" y="13" width="1" height="1.300" fill="#8a8a8a"/><rect x="573.85" y="13" width="1" height="1.300" fill="#8a8a8a"/><rect x="581.26" y="13" width="1" height="1.300" fill="#8a8a8a"/><rect x="588.67" y="12" width="1" height="2.500" fill="#8a8a8a"/><rect x="596.09" y="13" width="1" height="1.300" fill="#8a8a8a"/><rect x="603.50" y="13" width="1" height="1.300" fill="#8a8a8a"/><rect x="610.92" y="13" width="1" height="1.300" fill="#8a8a8a"/><rect x="618.34" y="13" width="1" height="1.300" fill="#8a8a8a"/><rect x="625.75" y="9" width="1" height="6" fill="#8a8a8a"/><rect x="633.16" y="13" width="1" height="1.300" fill="#8a8a8a"/><rect x="640.58" y="13" width="1" height="1.300" fill="#8a8a8a"/><rect x="648.00" y="13" width="1" height="1.300" fill="#8a8a8a"/><rect x="655.41" y="13" width="1" height="1.300" fill="#8a8a8a"/><rect x="662.83" y="12" width="1" height="2.500" fill="#8a8a8a"/><rect x="670.24" y="13" width="1" height="1.300" fill="#8a8a8a"/><rect x="677.65" y="13" width="1" height="1.300" fill="#8a8a8a"/><rect x="685.07" y="13" width="1" height="1.300" fill="#8a8a8a"/><rect x="692.49" y="13" width="1" height="1.300" fill="#8a8a8a"/><rect x="699.90" y="9" width="1" height="6" fill="#8a8a8a"/><rect x="707.32" y="13" width="1" height="1.300" fill="#8a8a8a"/><rect x="714.73" y="13" width="1" height="1.300" fill="#8a8a8a"/><rect x="722.14" y="13" width="1" height="1.300" fill="#8a8a8a"/><rect x="729.56" y="13" width="1" height="1.300" fill="#8a8a8a"/><rect x="736.98" y="12" width="1" height="2.500" fill="#8a8a8a"/><rect x="744.39" y="13" width="1" height="1.300" fill="#8a8a8a"/><rect x="751.81" y="13" width="1" height="1.300" fill="#8a8a8a"/><rect x="759.22" y="13" width="1" height="1.300" fill="#8a8a8a"/><rect x="766.63" y="13" width="1" height="1.300" fill="#8a8a8a"/><rect x="774.05" y="9" width="1" height="6" fill="#8a8a8a"/><rect x="781.47" y="13" width="1" height="1.300" fill="#8a8a8a"/><rect x="788.88" y="13" width="1" height="1.300" fill="#8a8a8a"/><rect x="796.30" y="13" width="1" height="1.300" fill="#8a8a8a"/><rect x="803.71" y="13" width="1" height="1.300" fill="#8a8a8a"/><rect x="811.12" y="12" width="1" height="2.500" fill="#8a8a8a"/><rect x="818.54" y="13" width="1" height="1.300" fill="#8a8a8a"/><rect x="825.95" y="13" width="1" height="1.300" fill="#8a8a8a"/><rect x="833.37" y="13" width="1" height="1.300" fill="#8a8a8a"/><rect x="840.79" y="13" width="1" height="1.300" fill="#8a8a8a"/><rect x="848.20" y="9" width="1" height="6" fill="#8a8a8a"/><rect x="855.62" y="13" width="1" height="1.300" fill="#8a8a8a"/><rect x="863.03" y="13" width="1" height="1.300" fill="#8a8a8a"/><rect x="870.44" y="13" width="1" height="1.300" fill="#8a8a8a"/><rect x="877.86" y="13" width="1" height="1.300" fill="#8a8a8a"/><rect x="885.28" y="12" width="1" height="2.500" fill="#8a8a8a"/><rect x="892.69" y="13" width="1" height="1.300" fill="#8a8a8a"/><rect x="900.11" y="13" width="1" height="1.300" fill="#8a8a8a"/><rect x="907.52" y="13" width="1" height="1.300" fill="#8a8a8a"/><rect x="914.93" y="13" width="1" height="1.300" fill="#8a8a8a"/><rect x="922.35" y="9" width="1" height="6" fill="#8a8a8a"/></svg>
<span class="t" style="left:60.3px;top:133.96px;font-size:9.5px;line-height:9.5px;color:#7a7a7a;transform-origin:0 0;transform:scaleX(0.8512);">200</span>
<span class="t" style="left:138.9px;top:133.96px;font-size:9.5px;line-height:9.5px;color:#7a7a7a;transform-origin:0 0;transform:scaleX(0.8496);">0</span>
<span class="t" style="left:208.6px;top:133.96px;font-size:9.5px;line-height:9.5px;color:#7a7a7a;transform-origin:0 0;transform:scaleX(0.8512);">200</span>
<span class="t" style="left:282.8px;top:133.96px;font-size:9.5px;line-height:9.5px;color:#7a7a7a;transform-origin:0 0;transform:scaleX(0.8512);">400</span>
<span class="t" style="left:356.9px;top:133.96px;font-size:9.5px;line-height:9.5px;color:#7a7a7a;transform-origin:0 0;transform:scaleX(0.8512);">600</span>
<span class="t" style="left:431.1px;top:133.96px;font-size:9.5px;line-height:9.5px;color:#7a7a7a;transform-origin:0 0;transform:scaleX(0.8512);">800</span>
<span class="t" style="left:502.9px;top:133.96px;font-size:9.5px;line-height:9.5px;color:#7a7a7a;transform-origin:0 0;transform:scaleX(0.8514);">1000</span>
<span class="t" style="left:577.1px;top:133.96px;font-size:9.5px;line-height:9.5px;color:#7a7a7a;transform-origin:0 0;transform:scaleX(0.8514);">1200</span>
<span class="t" style="left:651.2px;top:133.96px;font-size:9.5px;line-height:9.5px;color:#7a7a7a;transform-origin:0 0;transform:scaleX(0.8514);">1400</span>
<span class="t" style="left:725.4px;top:133.96px;font-size:9.5px;line-height:9.5px;color:#7a7a7a;transform-origin:0 0;transform:scaleX(0.8514);">1600</span>
<span class="t" style="left:799.5px;top:133.96px;font-size:9.5px;line-height:9.5px;color:#7a7a7a;transform-origin:0 0;transform:scaleX(0.8514);">1800</span>
<span class="t" style="left:873.7px;top:133.96px;font-size:9.5px;line-height:9.5px;color:#7a7a7a;transform-origin:0 0;transform:scaleX(0.8514);">2000</span>
<span class="t" style="left:920px;top:134.46px;font-size:9.5px;line-height:9.5px;color:#7a7a7a;transform-origin:0 0;transform:scaleX(0.9611);">пикселей</span>
<div class="a" style="left:941px;top:134px;width:1px;height:15px;background:#666;opacity:.6"></div>
<svg class="a" style="left:37px;top:136px;" width="10" height="10" viewBox="0 0 10 10"><path d="M1.500 1.500l7 7M1.500 5V1.500H5M2.500 8.500l1 .8M8.500 2.500l.8 1" stroke="#9a9a9a" stroke-width="1.100" fill="none"/></svg>
<svg class="a" style="left:34px;top:150px;" width="16" height="622" viewBox="0 0 16 622"><rect y="3.65" x="13" width="1.300" height="1" fill="#8a8a8a"/><rect y="11.07" x="13" width="1.300" height="1" fill="#8a8a8a"/><rect y="18.48" x="13" width="1.300" height="1" fill="#8a8a8a"/><rect y="25.90" x="9" width="6" height="1" fill="#8a8a8a"/><rect y="33.31" x="13" width="1.300" height="1" fill="#8a8a8a"/><rect y="40.73" x="13" width="1.300" height="1" fill="#8a8a8a"/><rect y="48.14" x="13" width="1.300" height="1" fill="#8a8a8a"/><rect y="55.56" x="13" width="1.300" height="1" fill="#8a8a8a"/><rect y="62.97" x="12" width="2.500" height="1" fill="#8a8a8a"/><rect y="70.39" x="13" width="1.300" height="1" fill="#8a8a8a"/><rect y="77.80" x="13" width="1.300" height="1" fill="#8a8a8a"/><rect y="85.22" x="13" width="1.300" height="1" fill="#8a8a8a"/><rect y="92.63" x="13" width="1.300" height="1" fill="#8a8a8a"/><rect y="100.05" x="9" width="6" height="1" fill="#8a8a8a"/><rect y="107.46" x="13" width="1.300" height="1" fill="#8a8a8a"/><rect y="114.88" x="13" width="1.300" height="1" fill="#8a8a8a"/><rect y="122.29" x="13" width="1.300" height="1" fill="#8a8a8a"/><rect y="129.71" x="13" width="1.300" height="1" fill="#8a8a8a"/><rect y="137.12" x="12" width="2.500" height="1" fill="#8a8a8a"/><rect y="144.54" x="13" width="1.300" height="1" fill="#8a8a8a"/><rect y="151.95" x="13" width="1.300" height="1" fill="#8a8a8a"/><rect y="159.37" x="13" width="1.300" height="1" fill="#8a8a8a"/><rect y="166.78" x="13" width="1.300" height="1" fill="#8a8a8a"/><rect y="174.20" x="9" width="6" height="1" fill="#8a8a8a"/><rect y="181.61" x="13" width="1.300" height="1" fill="#8a8a8a"/><rect y="189.03" x="13" width="1.300" height="1" fill="#8a8a8a"/><rect y="196.44" x="13" width="1.300" height="1" fill="#8a8a8a"/><rect y="203.86" x="13" width="1.300" height="1" fill="#8a8a8a"/><rect y="211.27" x="12" width="2.500" height="1" fill="#8a8a8a"/><rect y="218.69" x="13" width="1.300" height="1" fill="#8a8a8a"/><rect y="226.10" x="13" width="1.300" height="1" fill="#8a8a8a"/><rect y="233.52" x="13" width="1.300" height="1" fill="#8a8a8a"/><rect y="240.93" x="13" width="1.300" height="1" fill="#8a8a8a"/><rect y="248.35" x="9" width="6" height="1" fill="#8a8a8a"/><rect y="255.76" x="13" width="1.300" height="1" fill="#8a8a8a"/><rect y="263.18" x="13" width="1.300" height="1" fill="#8a8a8a"/><rect y="270.59" x="13" width="1.300" height="1" fill="#8a8a8a"/><rect y="278.01" x="13" width="1.300" height="1" fill="#8a8a8a"/><rect y="285.42" x="12" width="2.500" height="1" fill="#8a8a8a"/><rect y="292.84" x="13" width="1.300" height="1" fill="#8a8a8a"/><rect y="300.25" x="13" width="1.300" height="1" fill="#8a8a8a"/><rect y="307.67" x="13" width="1.300" height="1" fill="#8a8a8a"/><rect y="315.08" x="13" width="1.300" height="1" fill="#8a8a8a"/><rect y="322.50" x="9" width="6" height="1" fill="#8a8a8a"/><rect y="329.91" x="13" width="1.300" height="1" fill="#8a8a8a"/><rect y="337.33" x="13" width="1.300" height="1" fill="#8a8a8a"/><rect y="344.74" x="13" width="1.300" height="1" fill="#8a8a8a"/><rect y="352.16" x="13" width="1.300" height="1" fill="#8a8a8a"/><rect y="359.57" x="12" width="2.500" height="1" fill="#8a8a8a"/><rect y="366.99" x="13" width="1.300" height="1" fill="#8a8a8a"/><rect y="374.40" x="13" width="1.300" height="1" fill="#8a8a8a"/><rect y="381.82" x="13" width="1.300" height="1" fill="#8a8a8a"/><rect y="389.23" x="13" width="1.300" height="1" fill="#8a8a8a"/><rect y="396.65" x="9" width="6" height="1" fill="#8a8a8a"/><rect y="404.06" x="13" width="1.300" height="1" fill="#8a8a8a"/><rect y="411.48" x="13" width="1.300" height="1" fill="#8a8a8a"/><rect y="418.89" x="13" width="1.300" height="1" fill="#8a8a8a"/><rect y="426.31" x="13" width="1.300" height="1" fill="#8a8a8a"/><rect y="433.72" x="12" width="2.500" height="1" fill="#8a8a8a"/><rect y="441.14" x="13" width="1.300" height="1" fill="#8a8a8a"/><rect y="448.55" x="13" width="1.300" height="1" fill="#8a8a8a"/><rect y="455.97" x="13" width="1.300" height="1" fill="#8a8a8a"/><rect y="463.38" x="13" width="1.300" height="1" fill="#8a8a8a"/><rect y="470.80" x="9" width="6" height="1" fill="#8a8a8a"/><rect y="478.21" x="13" width="1.300" height="1" fill="#8a8a8a"/><rect y="485.63" x="13" width="1.300" height="1" fill="#8a8a8a"/><rect y="493.04" x="13" width="1.300" height="1" fill="#8a8a8a"/><rect y="500.46" x="13" width="1.300" height="1" fill="#8a8a8a"/><rect y="507.88" x="12" width="2.500" height="1" fill="#8a8a8a"/><rect y="515.29" x="13" width="1.300" height="1" fill="#8a8a8a"/><rect y="522.70" x="13" width="1.300" height="1" fill="#8a8a8a"/><rect y="530.12" x="13" width="1.300" height="1" fill="#8a8a8a"/><rect y="537.53" x="13" width="1.300" height="1" fill="#8a8a8a"/><rect y="544.95" x="9" width="6" height="1" fill="#8a8a8a"/><rect y="552.37" x="13" width="1.300" height="1" fill="#8a8a8a"/><rect y="559.78" x="13" width="1.300" height="1" fill="#8a8a8a"/><rect y="567.19" x="13" width="1.300" height="1" fill="#8a8a8a"/><rect y="574.61" x="13" width="1.300" height="1" fill="#8a8a8a"/><rect y="582.02" x="12" width="2.500" height="1" fill="#8a8a8a"/><rect y="589.44" x="13" width="1.300" height="1" fill="#8a8a8a"/><rect y="596.86" x="13" width="1.300" height="1" fill="#8a8a8a"/><rect y="604.27" x="13" width="1.300" height="1" fill="#8a8a8a"/><rect y="611.68" x="13" width="1.300" height="1" fill="#8a8a8a"/><rect y="619.10" x="9" width="6" height="1" fill="#8a8a8a"/></svg>
<span class="t" style="left:43px;top:702.2px;font-size:9.5px;line-height:9.5px;color:#7a7a7a;transform-origin:0 0;transform:rotate(-90deg) scaleX(0.8512) translateY(-84.65%);">200</span>
<span class="t" style="left:43px;top:623.5px;font-size:9.5px;line-height:9.5px;color:#7a7a7a;transform-origin:0 0;transform:rotate(-90deg) scaleX(0.8496) translateY(-84.65%);">0</span>
<span class="t" style="left:43px;top:553.9px;font-size:9.5px;line-height:9.5px;color:#7a7a7a;transform-origin:0 0;transform:rotate(-90deg) scaleX(0.8512) translateY(-84.65%);">200</span>
<span class="t" style="left:43px;top:479.7px;font-size:9.5px;line-height:9.5px;color:#7a7a7a;transform-origin:0 0;transform:rotate(-90deg) scaleX(0.8512) translateY(-84.65%);">400</span>
<span class="t" style="left:43px;top:405.6px;font-size:9.5px;line-height:9.5px;color:#7a7a7a;transform-origin:0 0;transform:rotate(-90deg) scaleX(0.8512) translateY(-84.65%);">600</span>
<span class="t" style="left:43px;top:331.4px;font-size:9.5px;line-height:9.5px;color:#7a7a7a;transform-origin:0 0;transform:rotate(-90deg) scaleX(0.8512) translateY(-84.65%);">800</span>
<span class="t" style="left:43px;top:259.5px;font-size:9.5px;line-height:9.5px;color:#7a7a7a;transform-origin:0 0;transform:rotate(-90deg) scaleX(0.8514) translateY(-84.65%);">1000</span>
<span class="t" style="left:43px;top:185.4px;font-size:9.5px;line-height:9.5px;color:#7a7a7a;transform-origin:0 0;transform:rotate(-90deg) scaleX(0.8514) translateY(-84.65%);">1200</span>
<span class="t" style="left:43px;top:767px;font-size:9.5px;line-height:9.5px;color:#7a7a7a;transform-origin:0 0;transform:rotate(-90deg) scaleX(0.9611) translateY(-84.65%);">пикселей</span>
<svg class="a" style="left:34px;top:437px;" width="17" height="1" viewBox="0 0 17 1"><path d="M0 .5h17" stroke="#666" stroke-dasharray="3 2"/></svg>
<div class="a" style="left:948px;top:150px;width:14px;height:606px;background:#fff;"></div>
<div class="a" style="left:948px;top:150px;width:14px;height:16px;background:#f0f0f0;"></div>
<div class="a" style="left:948px;top:740px;width:14px;height:16px;background:#f0f0f0;"></div>
<div class="a" style="left:948px;top:232px;width:14px;height:441px;background:#c9c9c9;"></div>
<svg class="a" style="left:951px;top:154px;" width="9" height="7" viewBox="0 0 9 7"><path d="M1 5.500L4.500 2 8 5.500" fill="none" stroke="#333" stroke-width="1.700"/></svg>
<svg class="a" style="left:951px;top:745px;" width="9" height="7" viewBox="0 0 9 7"><path d="M1 1.500L4.500 5 8 1.500" fill="none" stroke="#333" stroke-width="1.700"/></svg>
<div class="a" style="left:50px;top:756px;width:912px;height:16px;background:#fff;"></div>
<div class="a" style="left:50px;top:756px;width:16px;height:16px;background:#f0f0f0;"></div>
<div class="a" style="left:931px;top:756px;width:17px;height:16px;background:#f0f0f0;"></div>
<div class="a" style="left:948px;top:756px;width:14px;height:16px;background:#f0f0f0;"></div>
<div class="a" style="left:184px;top:757px;width:635px;height:14px;background:#c9c9c9;"></div>
<svg class="a" style="left:55px;top:759px;" width="7" height="9" viewBox="0 0 7 9"><path d="M5.500 1L2 4.500 5.500 8" fill="none" stroke="#333" stroke-width="1.700"/></svg>
<svg class="a" style="left:936px;top:759px;" width="7" height="9" viewBox="0 0 7 9"><path d="M1.500 1L5 4.500 1.500 8" fill="none" stroke="#333" stroke-width="1.700"/></svg>
<svg class="a" style="left:949px;top:758px;" width="12" height="12" viewBox="0 0 12 12"><circle cx="5" cy="5" r="4" fill="none" stroke="#333" stroke-width="1"/><path d="M8 8l3.500 3.500" stroke="#333" stroke-width="1.500"/><path d="M5 3v4M3 5h4" stroke="#333" stroke-width=".8"/></svg>
<div class="a" style="left:962px;top:113px;width:5px;height:700px;background:#fff;"></div>
<div class="a" style="left:964px;top:113px;width:1px;height:700px;background:#dcdcdc;"></div>
<div class="a" style="left:34px;top:772px;width:928px;height:22px;background:#f4f4f4;"></div>
<div class="a" style="left:212px;top:772px;width:101px;height:22px;background:#d6d6d6;"></div>
<div class="a" style="left:313px;top:772px;width:102px;height:22px;background:#fff;"></div>
<div class="a" style="left:415px;top:772px;width:103px;height:22px;background:#fff;"></div>
<div class="a" style="left:414px;top:772px;width:1px;height:22px;background:#e6e6e6;"></div>
<div class="a" style="left:518px;top:772px;width:1px;height:22px;background:#e6e6e6;"></div>
<svg class="a" style="left:40px;top:778px;" width="10" height="10" viewBox="0 0 10 10"><path d="M5 0v10M0 5h10" stroke="#333" stroke-width="1.250"/></svg>
<svg class="a" style="left:62px;top:778px;" width="9" height="9" viewBox="0 0 9 9"><path d="M.7 0v9" stroke="#b4b4b4" stroke-width="1.400"/><path d="M9 0v9L2.500 4.500z" fill="#b4b4b4"/></svg>
<svg class="a" style="left:84px;top:778px;" width="8" height="9" viewBox="0 0 8 9"><path d="M7.500 0v9L.5 4.500z" fill="#b4b4b4"/></svg>
<span class="t" style="left:105px;top:777.34px;font-size:12px;line-height:12px;color:#8a8a8a;transform-origin:0 0;transform:scaleX(0.8224);">1</span>
<span class="t" style="left:117px;top:777.34px;font-size:12px;line-height:12px;color:#8a8a8a;transform-origin:0 0;transform:scaleX(0.9821);">из</span>
<span class="t" style="left:133px;top:777.34px;font-size:12px;line-height:12px;color:#8a8a8a;transform-origin:0 0;transform:scaleX(0.8972);">3</span>
<svg class="a" style="left:155px;top:778px;" width="8" height="9" viewBox="0 0 8 9"><path d="M.5 0v9L7.500 4.500z" fill="#1d1d1d"/></svg>
<svg class="a" style="left:176px;top:778px;" width="9" height="9" viewBox="0 0 9 9"><path d="M8.300 0v9" stroke="#1d1d1d" stroke-width="1.400"/><path d="M0 0v9l6.500-4.500z" fill="#1d1d1d"/></svg>
<svg class="a" style="left:197px;top:778px;" width="10" height="10" viewBox="0 0 10 10"><path d="M5 0v10M0 5h10" stroke="#333" stroke-width="1.250"/></svg>
<span class="t" style="left:233px;top:777.34px;font-size:12px;line-height:12px;color:#1a1a1a;transform-origin:0 0;transform:scaleX(0.8850);">Страница 1</span>
<span class="t" style="left:336px;top:777.34px;font-size:12px;line-height:12px;color:#1a1a1a;transform-origin:0 0;transform:scaleX(0.8850);">Страница 2</span>
<span class="t" style="left:438px;top:777.34px;font-size:12px;line-height:12px;color:#1a1a1a;transform-origin:0 0;transform:scaleX(0.8850);">Страница 3</span>
<div class="a" style="left:34px;top:794px;width:928px;height:1px;background:#dcdcdc;"></div>
<div class="a" style="left:34px;top:795px;width:928px;height:18px;background:#f4f4f4;"></div>
<svg class="a" style="left:36px;top:797px;" width="6" height="14" viewBox="0 0 6 14"><rect x="0" y="0" width="1" height="1" fill="#b0b0b0"/><rect x="2" y="0" width="1" height="1" fill="#b0b0b0"/><rect x="4" y="0" width="1" height="1" fill="#b0b0b0"/><rect x="1" y="2" width="1" height="1" fill="#b0b0b0"/><rect x="3" y="2" width="1" height="1" fill="#b0b0b0"/><rect x="5" y="2" width="1" height="1" fill="#b0b0b0"/><rect x="0" y="4" width="1" height="1" fill="#b0b0b0"/><rect x="2" y="4" width="1" height="1" fill="#b0b0b0"/><rect x="4" y="4" width="1" height="1" fill="#b0b0b0"/><rect x="1" y="6" width="1" height="1" fill="#b0b0b0"/><rect x="3" y="6" width="1" height="1" fill="#b0b0b0"/><rect x="5" y="6" width="1" height="1" fill="#b0b0b0"/><rect x="0" y="8" width="1" height="1" fill="#b0b0b0"/><rect x="2" y="8" width="1" height="1" fill="#b0b0b0"/><rect x="4" y="8" width="1" height="1" fill="#b0b0b0"/><rect x="1" y="10" width="1" height="1" fill="#b0b0b0"/><rect x="3" y="10" width="1" height="1" fill="#b0b0b0"/><rect x="5" y="10" width="1" height="1" fill="#b0b0b0"/><rect x="0" y="12" width="1" height="1" fill="#b0b0b0"/><rect x="2" y="12" width="1" height="1" fill="#b0b0b0"/><rect x="4" y="12" width="1" height="1" fill="#b0b0b0"/></svg>
<svg class="a" style="left:47px;top:800px;" width="6" height="8" viewBox="0 0 6 8"><path d="M.5 0v8L5.500 4z" fill="#555"/></svg>
<svg class="a" style="left:61px;top:797px;" width="14" height="14" viewBox="0 0 17 17"><path d="M2 15.500l-.8-.8L9 7l1.500 1.500z" fill="#fff" stroke="#1d1d1d" stroke-width="1.100"/><path d="M1 16l.3-2.200L4.500 10.500l1.500 1.500L3 15.500z" fill="#e8761d"/><path d="M8.500 5l1.500-1.500 1 1L13.500 2a1.800 1.800 0 0 1 2.500 2.500L13.500 7l1 1L13 9.500z" fill="#1d1d1d"/></svg>
<svg class="a" style="left:82px;top:799px;" width="7" height="10" viewBox="0 0 7 10"><path d="M6 .5L1 5l5 4.500" fill="none" stroke="#c0c0c0" stroke-width="1.500"/></svg>
<svg class="a" style="left:93.75px;top:796px;" width="221.5" height="15.5" viewBox="0 0 221.5 15.5"><rect x=".4" y=".4" width="15.37" height="14.700" fill="#fff" stroke="#666" stroke-width=".8"/><path d="M2.500 13L13.500 2.500" stroke="#e0352b" stroke-width="1.100"/><rect x="15.77" y="0" width="15.97" height="15.500" fill="#000000"/><rect x="15.37" y="0" width=".8" height="15.500" fill="#333" opacity=".55"/><rect x="31.54" y="0" width="15.97" height="15.500" fill="#ffffff"/><rect x="31.14" y="0" width=".8" height="15.500" fill="#333" opacity=".55"/><rect x="47.30" y="0" width="15.97" height="15.500" fill="#d9a971"/><rect x="46.90" y="0" width=".8" height="15.500" fill="#333" opacity=".55"/><rect x="63.07" y="0" width="15.97" height="15.500" fill="#c98f42"/><rect x="62.67" y="0" width=".8" height="15.500" fill="#333" opacity=".55"/><rect x="78.84" y="0" width="15.97" height="15.500" fill="#e0c887"/><rect x="78.44" y="0" width=".8" height="15.500" fill="#333" opacity=".55"/><rect x="94.61" y="0" width="15.97" height="15.500" fill="#f0efc0"/><rect x="94.21" y="0" width=".8" height="15.500" fill="#333" opacity=".55"/><rect x="110.38" y="0" width="15.97" height="15.500" fill="#a8d1b1"/><rect x="109.97" y="0" width=".8" height="15.500" fill="#333" opacity=".55"/><rect x="126.14" y="0" width="15.97" height="15.500" fill="#d4f7f6"/><rect x="125.74" y="0" width=".8" height="15.500" fill="#333" opacity=".55"/><rect x="141.91" y="0" width="15.97" height="15.500" fill="#b3f1ee"/><rect x="141.51" y="0" width=".8" height="15.500" fill="#333" opacity=".55"/><rect x="157.68" y="0" width="15.97" height="15.500" fill="#9199ef"/><rect x="157.28" y="0" width=".8" height="15.500" fill="#333" opacity=".55"/><rect x="173.45" y="0" width="15.97" height="15.500" fill="#d7b7e9"/><rect x="173.05" y="0" width=".8" height="15.500" fill="#333" opacity=".55"/><rect x="189.21" y="0" width="15.97" height="15.500" fill="#dbbfeb"/><rect x="188.81" y="0" width=".8" height="15.500" fill="#333" opacity=".55"/><rect x="204.98" y="0" width="15.97" height="15.500" fill="#ef5f87"/><rect x="204.58" y="0" width=".8" height="15.500" fill="#333" opacity=".55"/><rect x="15.77" y="0" width="204.98" height=".8" fill="#333" opacity=".5"/><rect x="15.77" y="14.700" width="204.98" height=".8" fill="#333" opacity=".5"/><rect x="219.95" y="0" width=".8" height="15.500" fill="#333" opacity=".5"/></svg>
<svg class="a" style="left:928px;top:797px;" width="8" height="11" viewBox="0 0 8 11"><path d="M1 .5l6 5-6 5" fill="none" stroke="#c4c4c4" stroke-width="1.500"/></svg>
<svg class="a" style="left:945px;top:799px;" width="8" height="8" viewBox="0 0 8 8"><path d="M.5 .5l3 3.500-3 3.500M4.500 .5l3 3.500-3 3.500" fill="none" stroke="#b0b0b0" stroke-width="1.100"/></svg>
<div class="a" style="left:1px;top:813px;width:1278px;height:1px;background:#d5d5d5;"></div>
<div class="a" style="left:5px;top:814px;width:1270px;height:34px;background:#f4f4f4;"></div>
<svg class="a" style="left:13px;top:822px;" width="18" height="18" viewBox="0 0 17 17"><g transform="translate(8.500 8.500)"><rect x="-1.700" y="-8.300" width="3.400" height="3.600" rx=".5" transform="rotate(0)" fill="#1d1d1d"/><rect x="-1.700" y="-8.300" width="3.400" height="3.600" rx=".5" transform="rotate(45)" fill="#1d1d1d"/><rect x="-1.700" y="-8.300" width="3.400" height="3.600" rx=".5" transform="rotate(90)" fill="#1d1d1d"/><rect x="-1.700" y="-8.300" width="3.400" height="3.600" rx=".5" transform="rotate(135)" fill="#1d1d1d"/><rect x="-1.700" y="-8.300" width="3.400" height="3.600" rx=".5" transform="rotate(180)" fill="#1d1d1d"/><rect x="-1.700" y="-8.300" width="3.400" height="3.600" rx=".5" transform="rotate(225)" fill="#1d1d1d"/><rect x="-1.700" y="-8.300" width="3.400" height="3.600" rx=".5" transform="rotate(270)" fill="#1d1d1d"/><rect x="-1.700" y="-8.300" width="3.400" height="3.600" rx=".5" transform="rotate(315)" fill="#1d1d1d"/><circle r="5" fill="none" stroke="#1d1d1d" stroke-width="2.300"/></g></svg>
<svg class="a" style="left:28px;top:838px;" width="4" height="4" viewBox="0 0 4 4"><path d="M4 0v4H0z" fill="#777"/></svg>
<span class="t" style="left:38px;top:825.34px;font-size:12px;line-height:12px;color:#1a1a1a;transform-origin:0 0;transform:scaleX(0.9227);">Советы по инструментам</span>
<svg class="a" style="left:823px;top:821px;" width="17" height="18" viewBox="0 0 17 18"><path d="M7.500 3l6 6-6 6-6-6z" fill="#fff" stroke="#1d1d1d" stroke-width="1.500"/><path d="M3.800 9.800h7.400L7.500 14z" fill="#1d1d1d"/><path d="M10.500 11.500h5.500v5.500z" fill="#d9201c" transform="translate(0 -1)"/></svg>
<svg class="a" style="left:841px;top:820px;" width="21" height="21" viewBox="0 0 21 21"><rect x=".5" y=".5" width="20" height="20" fill="#fff" stroke="#8a8a8a"/><path d="M2 19L19 2" stroke="#d9201c" stroke-width="1.500"/></svg>
<span class="t" style="left:866px;top:825.34px;font-size:12px;line-height:12px;color:#1a1a1a;transform-origin:0 0;transform:scaleX(0.8807);">Нет</span>
<svg class="a" style="left:1014px;top:822px;" width="10" height="18" viewBox="0 0 10 18"><path d="M5 1.500c-2 2.500-3.500 5-3.500 8.500L3 13h4l1.500-3c0-3.500-1.500-6-3.500-8.500z" fill="#fff" stroke="#1d1d1d" stroke-width="1.100"/><path d="M5 3v6.500" stroke="#1d1d1d"/><circle cx="5" cy="9.500" r="1" fill="#1d1d1d"/><path d="M2.500 14.500h5v2.500h-5z" fill="none" stroke="#1d1d1d"/></svg>
<div class="a" style="left:1026px;top:821px;width:20px;height:20px;background:#000;"></div>
<span class="t" style="left:1049px;top:825.34px;font-size:12px;line-height:12px;color:#1a1a1a;transform-origin:0 0;transform:scaleX(0.8364);">R:0 G:0 B:0 (#000000)</span>
<div class="a" style="left:1240px;top:820px;width:1px;height:21px;background:#d0d0d0;"></div>
<svg class="a" style="left:1251px;top:821px;" width="17" height="18" viewBox="0 0 17 18"><rect x=".6" y=".6" width="15.800" height="12" rx="1" fill="#e8f0ff" stroke="#c0281c" stroke-width="1.200"/><rect x="1.500" y="1.500" width="14" height="4.500" fill="#d9201c"/><rect x="1.500" y="7.500" width="14" height="4" fill="#1a73c8"/><circle cx="8.500" cy="6.800" r="2" fill="#fff" stroke="#1a73c8" stroke-width=".8"/><path d="M4.500 15.500h8M8.500 13v2.500" stroke="#444" stroke-width="1.400"/></svg>
<div class="a" style="left:51px;top:150px;width:897px;height:606px;background:#fff;"></div>
<svg class="a" style="left:50px;top:150px;" width="898" height="606" viewBox="50 150 898 606"><defs>
<linearGradient id="lg1" x1="0" y1="0" x2="0" y2="1"><stop offset="0" stop-color="#2c9ab3"/><stop offset=".45" stop-color="#41b2c7"/><stop offset=".8" stop-color="#6fdce8"/><stop offset="1" stop-color="#7fe6ef"/></linearGradient>
<radialGradient id="rg1" cx=".5" cy=".85" r=".9"><stop offset="0" stop-color="#73e4ec"/><stop offset=".6" stop-color="#3aabc0"/><stop offset="1" stop-color="#2c98b2"/></radialGradient>
<linearGradient id="lgL" x1="0" y1="0" x2="0" y2="1"><stop offset="0" stop-color="#c4addf"/><stop offset="1" stop-color="#f3ecfa"/></linearGradient>
<radialGradient id="rgL" cx=".5" cy=".8" r=".9"><stop offset="0" stop-color="#faf6fd"/><stop offset="1" stop-color="#c8b2e2"/></radialGradient>
<linearGradient id="lgP" x1="0" y1="0" x2="0" y2="1"><stop offset="0" stop-color="#ec6f8f"/><stop offset="1" stop-color="#f9c3cf"/></linearGradient>
<radialGradient id="rgP" cx=".5" cy=".8" r=".9"><stop offset="0" stop-color="#fbd0d9"/><stop offset="1" stop-color="#ea6a8c"/></radialGradient>
<linearGradient id="lgB" x1="0" y1="0" x2="0" y2="1"><stop offset="0" stop-color="#4a52ee"/><stop offset="1" stop-color="#a5abfa"/></linearGradient>
<radialGradient id="rgB" cx=".5" cy=".8" r=".9"><stop offset="0" stop-color="#b0b6fb"/><stop offset="1" stop-color="#4f57ef"/></radialGradient>
<linearGradient id="lfA" gradientUnits="userSpaceOnUse" x1="190" y1="345" x2="290" y2="405"><stop offset="0" stop-color="#c9b6e6"/><stop offset=".55" stop-color="#e9e6c9"/><stop offset="1" stop-color="#f3f0b8"/></linearGradient>
<linearGradient id="lfB" gradientUnits="userSpaceOnUse" x1="230" y1="310" x2="285" y2="400"><stop offset="0" stop-color="#c9b6e6"/><stop offset=".5" stop-color="#b9c3cd"/><stop offset="1" stop-color="#a8d1b1"/></linearGradient>
<linearGradient id="lfC" gradientUnits="userSpaceOnUse" x1="293" y1="305" x2="290" y2="400"><stop offset="0" stop-color="#c9b6e6"/><stop offset=".5" stop-color="#b5c3cc"/><stop offset="1" stop-color="#a8d1b1"/></linearGradient>
<radialGradient id="rgC" cx=".5" cy=".7" r=".75"><stop offset="0" stop-color="#d3b4e4"/><stop offset="1" stop-color="#ebdff5"/></radialGradient>
<pattern id="dotsL" x="547.630" y="292.060" width="9.540" height="10.480" patternUnits="userSpaceOnUse"><circle cx="4.770" cy="5.240" r="2.350" fill="#d8f6f8"/></pattern>
<pattern id="dotsR" x="641.990" y="292.060" width="9.630" height="10.480" patternUnits="userSpaceOnUse"><circle cx="4.810" cy="5.240" r="2.350" fill="#9aefe9"/></pattern>
<pattern id="grid3" x="543" y="450" width="2" height="2" patternUnits="userSpaceOnUse"><path d="M0 .5h2M.5 0v2" stroke="#e6f4fb" stroke-width=".6"/></pattern>
<linearGradient id="fadeTR" x1="0" y1="1" x2="1" y2="0"><stop offset="0" stop-color="#fff" stop-opacity="0"/><stop offset=".35" stop-color="#fff" stop-opacity=".0"/><stop offset="1" stop-color="#fff" stop-opacity=".75"/></linearGradient>
<radialGradient id="fadeA" cx=".5" cy=".5" r=".5"><stop offset="0" stop-color="#fff" stop-opacity=".7"/><stop offset=".55" stop-color="#fff" stop-opacity=".4"/><stop offset="1" stop-color="#fff" stop-opacity="0"/></radialGradient>
<mask id="mTR"><rect x="322" y="288" width="150" height="140" fill="url(#fadeA)"/></mask>
<mask id="mBL"><rect x="148" y="462" width="160" height="150" fill="url(#fadeA)"/></mask>
</defs><rect x="146.400" y="291.400" width="334" height="332.700" fill="#bcb9b9"/><rect x="142.900" y="288.600" width="330.800" height="330.400" fill="#b5f3ef" stroke="#000" stroke-width="3.600"/><g mask="url(#mTR)" stroke="#fff" fill="none"><g stroke-width="2.400" opacity=".25"><path d="M328.2 292V430M326 286.3H472"/><path d="M349.4 292V430M326 307.5H472"/><path d="M370.6 292V430M326 328.7H472"/><path d="M391.8 292V430M326 349.9H472"/><path d="M413.0 292V430M326 371.1H472"/><path d="M434.2 292V430M326 392.3H472"/><path d="M455.4 292V430M326 413.5H472"/><path d="M476.6 292V430M326 434.7H472"/></g><g stroke-width="1.100"><path d="M328.2 292V430M326 286.3H472"/><path d="M349.4 292V430M326 307.5H472"/><path d="M370.6 292V430M326 328.7H472"/><path d="M391.8 292V430M326 349.9H472"/><path d="M413.0 292V430M326 371.1H472"/><path d="M434.2 292V430M326 392.3H472"/><path d="M455.4 292V430M326 413.5H472"/><path d="M476.6 292V430M326 434.7H472"/></g></g><g mask="url(#mBL)" stroke="#fff" fill="none"><g stroke-width="2.400" opacity=".25"><path d="M161.0 462V618M145 474.0H310"/><path d="M182.2 462V618M145 495.2H310"/><path d="M203.4 462V618M145 516.4H310"/><path d="M224.6 462V618M145 537.6H310"/><path d="M245.8 462V618M145 558.8H310"/><path d="M267.0 462V618M145 580.0H310"/><path d="M288.2 462V618M145 601.2H310"/><path d="M309.4 462V618M145 622.4H310"/></g><g stroke-width="1.100"><path d="M161.0 462V618M145 474.0H310"/><path d="M182.2 462V618M145 495.2H310"/><path d="M203.4 462V618M145 516.4H310"/><path d="M224.6 462V618M145 537.6H310"/><path d="M245.8 462V618M145 558.8H310"/><path d="M267.0 462V618M145 580.0H310"/><path d="M288.2 462V618M145 601.2H310"/><path d="M309.4 462V618M145 622.4H310"/></g></g><linearGradient id="lf1" gradientUnits="userSpaceOnUse" x1="293.0" y1="311.9" x2="290.6" y2="406.3"><stop offset="0" stop-color="#bcbcd6"/><stop offset="1" stop-color="#a6d0b0"/></linearGradient><clipPath id="lc1"><path d="M293.2 306.0L290.2 310.8L287.3 315.7L284.4 320.5L281.7 325.4L279.2 330.2L276.9 335.1L274.9 339.9L273.1 344.8L271.7 349.7L270.7 354.6L270.0 359.5L269.7 364.4L269.7 369.3L270.2 374.3L271.0 379.2L272.1 384.1L273.6 389.1L275.3 394.1L277.4 399.0L279.6 404.0L282.1 409.0L284.7 414.0L287.4 419.0L290.1 424.0L293.1 419.1L296.1 414.3L298.9 409.4L301.6 404.6L304.1 399.7L306.4 394.9L308.5 390.0L310.2 385.1L311.6 380.3L312.6 375.4L313.3 370.5L313.6 365.6L313.6 360.6L313.2 355.7L312.4 350.8L311.2 345.8L309.7 340.9L308.0 335.9L305.9 330.9L303.7 325.9L301.2 321.0L298.6 316.0L295.9 311.0z"/></clipPath><path d="M293.2 306.0L290.2 310.8L287.3 315.7L284.4 320.5L281.7 325.4L279.2 330.2L276.9 335.1L274.9 339.9L273.1 344.8L271.7 349.7L270.7 354.6L270.0 359.5L269.7 364.4L269.7 369.3L270.2 374.3L271.0 379.2L272.1 384.1L273.6 389.1L275.3 394.1L277.4 399.0L279.6 404.0L282.1 409.0L284.7 414.0L287.4 419.0L290.1 424.0L293.1 419.1L296.1 414.3L298.9 409.4L301.6 404.6L304.1 399.7L306.4 394.9L308.5 390.0L310.2 385.1L311.6 380.3L312.6 375.4L313.3 370.5L313.6 365.6L313.6 360.6L313.2 355.7L312.4 350.8L311.2 345.8L309.7 340.9L308.0 335.9L305.9 330.9L303.7 325.9L301.2 321.0L298.6 316.0L295.9 311.0z" fill="url(#lf1)"/><g clip-path="url(#lc1)" fill="none" stroke="#2b3f73" stroke-width="1.150"><path d="M293.2 306.0L290.1 424.0"/><path d="M292.3 341.4Q291.3 322.5 286.1 317.6"/><path d="M292.3 341.4Q294.3 322.6 299.7 318.0"/><path d="M292.0 353.2Q289.6 334.2 279.7 329.3"/><path d="M292.0 353.2Q295.3 334.4 305.5 329.9"/><path d="M291.7 365.0Q288.2 346.0 274.5 340.9"/><path d="M291.7 365.0Q296.1 346.2 310.1 341.9"/><path d="M291.3 376.8Q287.2 357.8 271.0 352.6"/><path d="M291.3 376.8Q296.4 358.0 312.9 353.7"/><path d="M291.0 390.9Q286.6 371.9 269.6 366.8"/><path d="M291.0 390.9Q296.3 372.2 313.5 367.9"/><path d="M290.6 405.1Q286.7 386.1 271.3 381.0"/><path d="M290.6 405.1Q295.5 386.3 311.1 382.0"/></g><path d="M293.2 306.0L290.2 310.8L287.3 315.7L284.4 320.5L281.7 325.4L279.2 330.2L276.9 335.1L274.9 339.9L273.1 344.8L271.7 349.7L270.7 354.6L270.0 359.5L269.7 364.4L269.7 369.3L270.2 374.3L271.0 379.2L272.1 384.1L273.6 389.1L275.3 394.1L277.4 399.0L279.6 404.0L282.1 409.0L284.7 414.0L287.4 419.0L290.1 424.0L293.1 419.1L296.1 414.3L298.9 409.4L301.6 404.6L304.1 399.7L306.4 394.9L308.5 390.0L310.2 385.1L311.6 380.3L312.6 375.4L313.3 370.5L313.6 365.6L313.6 360.6L313.2 355.7L312.4 350.8L311.2 345.8L309.7 340.9L308.0 335.9L305.9 330.9L303.7 325.9L301.2 321.0L298.6 316.0L295.9 311.0z" fill="none" stroke="#4850f0" stroke-width="3.100" stroke-linejoin="miter" stroke-miterlimit="8"/><linearGradient id="lf2" gradientUnits="userSpaceOnUse" x1="234.3" y1="317.9" x2="268.6" y2="405.8"><stop offset="0" stop-color="#bcbcd6"/><stop offset="1" stop-color="#a6d0b0"/></linearGradient><clipPath id="lc2"><path d="M232.2 312.4L231.3 318.0L230.5 323.6L229.7 329.2L229.1 334.7L228.7 340.2L228.4 345.5L228.4 350.8L228.7 356.0L229.3 361.0L230.3 365.9L231.5 370.7L233.1 375.4L235.1 379.9L237.4 384.3L240.1 388.5L243.0 392.6L246.3 396.6L249.9 400.5L253.7 404.3L257.7 408.0L261.9 411.7L266.2 415.2L270.6 418.8L275.1 422.3L276.0 416.7L276.8 411.1L277.5 405.5L278.2 400.0L278.6 394.6L278.8 389.2L278.8 383.9L278.5 378.8L277.9 373.7L277.0 368.8L275.7 364.0L274.1 359.4L272.2 354.9L269.9 350.5L267.2 346.2L264.2 342.1L261.0 338.1L257.4 334.2L253.6 330.4L249.6 326.7L245.4 323.1L241.1 319.5L236.7 315.9z"/></clipPath><path d="M232.2 312.4L231.3 318.0L230.5 323.6L229.7 329.2L229.1 334.7L228.7 340.2L228.4 345.5L228.4 350.8L228.7 356.0L229.3 361.0L230.3 365.9L231.5 370.7L233.1 375.4L235.1 379.9L237.4 384.3L240.1 388.5L243.0 392.6L246.3 396.6L249.9 400.5L253.7 404.3L257.7 408.0L261.9 411.7L266.2 415.2L270.6 418.8L275.1 422.3L276.0 416.7L276.8 411.1L277.5 405.5L278.2 400.0L278.6 394.6L278.8 389.2L278.8 383.9L278.5 378.8L277.9 373.7L277.0 368.8L275.7 364.0L274.1 359.4L272.2 354.9L269.9 350.5L267.2 346.2L264.2 342.1L261.0 338.1L257.4 334.2L253.6 330.4L249.6 326.7L245.4 323.1L241.1 319.5L236.7 315.9z" fill="url(#lf2)"/><g clip-path="url(#lc2)" fill="none" stroke="#2b3f73" stroke-width="1.150"><path d="M232.2 312.4L275.1 422.3"/><path d="M245.1 345.4Q236.8 328.3 230.2 325.9"/><path d="M245.1 345.4Q239.6 327.2 242.8 320.9"/><path d="M249.3 356.4Q239.8 339.8 228.7 339.1"/><path d="M249.3 356.4Q245.1 337.8 252.8 329.7"/><path d="M253.6 367.4Q243.1 351.2 228.5 351.8"/><path d="M253.6 367.4Q250.4 348.4 261.6 338.9"/><path d="M257.9 378.4Q246.8 362.4 229.9 364.0"/><path d="M257.9 378.4Q255.3 359.1 268.8 348.8"/><path d="M263.1 391.6Q251.7 375.7 234.0 377.5"/><path d="M263.1 391.6Q260.7 372.2 274.9 361.6"/><path d="M268.2 404.7Q257.3 388.7 241.1 390.0"/><path d="M268.2 404.7Q265.4 385.6 278.2 375.5"/></g><path d="M232.2 312.4L231.3 318.0L230.5 323.6L229.7 329.2L229.1 334.7L228.7 340.2L228.4 345.5L228.4 350.8L228.7 356.0L229.3 361.0L230.3 365.9L231.5 370.7L233.1 375.4L235.1 379.9L237.4 384.3L240.1 388.5L243.0 392.6L246.3 396.6L249.9 400.5L253.7 404.3L257.7 408.0L261.9 411.7L266.2 415.2L270.6 418.8L275.1 422.3L276.0 416.7L276.8 411.1L277.5 405.5L278.2 400.0L278.6 394.6L278.8 389.2L278.8 383.9L278.5 378.8L277.9 373.7L277.0 368.8L275.7 364.0L274.1 359.4L272.2 354.9L269.9 350.5L267.2 346.2L264.2 342.1L261.0 338.1L257.4 334.2L253.6 330.4L249.6 326.7L245.4 323.1L241.1 319.5L236.7 315.9z" fill="none" stroke="#4850f0" stroke-width="3.100" stroke-linejoin="miter" stroke-miterlimit="8"/><linearGradient id="lf3" gradientUnits="userSpaceOnUse" x1="192.6" y1="351.8" x2="265.9" y2="411.2"><stop offset="0" stop-color="#cdb9e3"/><stop offset="1" stop-color="#f4f2b9"/></linearGradient><clipPath id="lc3"><path d="M188.0 348.1L189.9 353.5L191.9 358.9L193.9 364.2L196.0 369.4L198.3 374.5L200.7 379.3L203.3 383.9L206.0 388.3L209.0 392.5L212.2 396.3L215.7 399.9L219.4 403.1L223.3 406.0L227.5 408.7L231.9 411.0L236.6 413.1L241.5 414.9L246.5 416.4L251.8 417.8L257.2 418.9L262.7 419.9L268.3 420.8L274.0 421.6L279.7 422.4L277.8 416.9L275.8 411.5L273.8 406.2L271.7 401.0L269.4 396.0L267.0 391.2L264.4 386.5L261.7 382.1L258.7 378.0L255.5 374.2L252.0 370.6L248.3 367.4L244.4 364.4L240.2 361.8L235.8 359.4L231.1 357.4L226.2 355.6L221.2 354.0L215.9 352.7L210.5 351.5L205.0 350.5L199.4 349.7L193.7 348.9z"/></clipPath><path d="M188.0 348.1L189.9 353.5L191.9 358.9L193.9 364.2L196.0 369.4L198.3 374.5L200.7 379.3L203.3 383.9L206.0 388.3L209.0 392.5L212.2 396.3L215.7 399.9L219.4 403.1L223.3 406.0L227.5 408.7L231.9 411.0L236.6 413.1L241.5 414.9L246.5 416.4L251.8 417.8L257.2 418.9L262.7 419.9L268.3 420.8L274.0 421.6L279.7 422.4L277.8 416.9L275.8 411.5L273.8 406.2L271.7 401.0L269.4 396.0L267.0 391.2L264.4 386.5L261.7 382.1L258.7 378.0L255.5 374.2L252.0 370.6L248.3 367.4L244.4 364.4L240.2 361.8L235.8 359.4L231.1 357.4L226.2 355.6L221.2 354.0L215.9 352.7L210.5 351.5L205.0 350.5L199.4 349.7L193.7 348.9z" fill="url(#lf3)"/><g clip-path="url(#lc3)" fill="none" stroke="#2b3f73" stroke-width="1.150"><path d="M188.0 348.1L279.7 422.4"/><path d="M215.5 370.4Q199.9 359.7 192.7 361.0"/><path d="M215.5 370.4Q201.8 357.3 201.6 350.0"/><path d="M224.7 377.8Q208.1 368.2 197.8 373.5"/><path d="M224.7 377.8Q211.9 363.6 214.8 352.4"/><path d="M233.9 385.2Q216.6 376.5 203.8 384.8"/><path d="M233.9 385.2Q221.8 370.2 227.2 355.9"/><path d="M243.0 392.7Q225.3 384.5 210.9 394.8"/><path d="M243.0 392.7Q231.4 377.0 238.4 360.8"/><path d="M254.0 401.6Q236.2 393.6 221.2 404.6"/><path d="M254.0 401.6Q242.5 385.8 250.1 368.9"/><path d="M265.0 410.5Q247.5 402.2 233.6 411.8"/><path d="M265.0 410.5Q253.2 395.0 259.8 379.5"/></g><path d="M188.0 348.1L189.9 353.5L191.9 358.9L193.9 364.2L196.0 369.4L198.3 374.5L200.7 379.3L203.3 383.9L206.0 388.3L209.0 392.5L212.2 396.3L215.7 399.9L219.4 403.1L223.3 406.0L227.5 408.7L231.9 411.0L236.6 413.1L241.5 414.9L246.5 416.4L251.8 417.8L257.2 418.9L262.7 419.9L268.3 420.8L274.0 421.6L279.7 422.4L277.8 416.9L275.8 411.5L273.8 406.2L271.7 401.0L269.4 396.0L267.0 391.2L264.4 386.5L261.7 382.1L258.7 378.0L255.5 374.2L252.0 370.6L248.3 367.4L244.4 364.4L240.2 361.8L235.8 359.4L231.1 357.4L226.2 355.6L221.2 354.0L215.9 352.7L210.5 351.5L205.0 350.5L199.4 349.7L193.7 348.9z" fill="none" stroke="#4850f0" stroke-width="3.100" stroke-linejoin="miter" stroke-miterlimit="8"/><linearGradient id="lf4" gradientUnits="userSpaceOnUse" x1="346.3" y1="593.1" x2="314.0" y2="504.3"><stop offset="0" stop-color="#d3c3e6"/><stop offset="1" stop-color="#a6d0b0"/></linearGradient><clipPath id="lc4"><path d="M348.3 598.6L349.3 593.0L350.3 587.4L351.2 581.9L351.9 576.4L352.5 570.9L352.8 565.6L352.9 560.3L352.8 555.1L352.3 550.1L351.5 545.1L350.3 540.3L348.8 535.6L346.9 531.1L344.7 526.6L342.2 522.3L339.3 518.2L336.1 514.1L332.6 510.1L328.9 506.2L325.0 502.4L320.9 498.7L316.7 495.0L312.3 491.4L307.9 487.7L306.9 493.3L306.0 498.9L305.1 504.5L304.3 510.0L303.8 515.4L303.4 520.8L303.3 526.0L303.5 531.2L304.0 536.2L304.8 541.2L305.9 546.0L307.4 550.7L309.3 555.2L311.5 559.7L314.1 564.0L316.9 568.2L320.1 572.2L323.6 576.2L327.3 580.1L331.2 583.9L335.3 587.6L339.6 591.3L343.9 595.0z"/></clipPath><path d="M348.3 598.6L349.3 593.0L350.3 587.4L351.2 581.9L351.9 576.4L352.5 570.9L352.8 565.6L352.9 560.3L352.8 555.1L352.3 550.1L351.5 545.1L350.3 540.3L348.8 535.6L346.9 531.1L344.7 526.6L342.2 522.3L339.3 518.2L336.1 514.1L332.6 510.1L328.9 506.2L325.0 502.4L320.9 498.7L316.7 495.0L312.3 491.4L307.9 487.7L306.9 493.3L306.0 498.9L305.1 504.5L304.3 510.0L303.8 515.4L303.4 520.8L303.3 526.0L303.5 531.2L304.0 536.2L304.8 541.2L305.9 546.0L307.4 550.7L309.3 555.2L311.5 559.7L314.1 564.0L316.9 568.2L320.1 572.2L323.6 576.2L327.3 580.1L331.2 583.9L335.3 587.6L339.6 591.3L343.9 595.0z" fill="url(#lf4)"/><g clip-path="url(#lc4)" fill="none" stroke="#2b3f73" stroke-width="1.150"><path d="M348.3 598.6L307.9 487.7"/><path d="M336.2 565.3Q344.1 582.6 350.7 585.2"/><path d="M336.2 565.3Q341.2 583.6 337.9 589.8"/><path d="M332.2 554.2Q341.3 571.0 352.4 572.0"/><path d="M332.2 554.2Q335.9 573.0 328.1 580.8"/><path d="M328.1 543.2Q338.3 559.6 352.9 559.2"/><path d="M328.1 543.2Q330.9 562.2 319.5 571.4"/><path d="M324.1 532.1Q334.9 548.2 351.8 547.1"/><path d="M324.1 532.1Q326.2 551.4 312.5 561.4"/><path d="M319.2 518.8Q330.2 534.9 347.9 533.4"/><path d="M319.2 518.8Q321.2 538.2 306.7 548.5"/><path d="M314.4 505.5Q325.0 521.7 341.2 520.8"/><path d="M314.4 505.5Q316.7 524.7 303.8 534.4"/></g><path d="M348.3 598.6L349.3 593.0L350.3 587.4L351.2 581.9L351.9 576.4L352.5 570.9L352.8 565.6L352.9 560.3L352.8 555.1L352.3 550.1L351.5 545.1L350.3 540.3L348.8 535.6L346.9 531.1L344.7 526.6L342.2 522.3L339.3 518.2L336.1 514.1L332.6 510.1L328.9 506.2L325.0 502.4L320.9 498.7L316.7 495.0L312.3 491.4L307.9 487.7L306.9 493.3L306.0 498.9L305.1 504.5L304.3 510.0L303.8 515.4L303.4 520.8L303.3 526.0L303.5 531.2L304.0 536.2L304.8 541.2L305.9 546.0L307.4 550.7L309.3 555.2L311.5 559.7L314.1 564.0L316.9 568.2L320.1 572.2L323.6 576.2L327.3 580.1L331.2 583.9L335.3 587.6L339.6 591.3L343.9 595.0z" fill="none" stroke="#4850f0" stroke-width="3.100" stroke-linejoin="miter" stroke-miterlimit="8"/><linearGradient id="lf5" gradientUnits="userSpaceOnUse" x1="393.8" y1="579.4" x2="346.5" y2="497.6"><stop offset="0" stop-color="#e3cbe0"/><stop offset="1" stop-color="#f4f2b9"/></linearGradient><clipPath id="lc5"><path d="M396.7 584.5L396.7 578.8L396.7 573.1L396.6 567.5L396.4 562.0L396.0 556.5L395.4 551.2L394.6 546.0L393.5 540.9L392.2 536.0L390.5 531.3L388.5 526.8L386.3 522.4L383.6 518.2L380.7 514.3L377.4 510.5L373.9 506.8L370.0 503.4L365.9 500.1L361.6 496.9L357.1 493.8L352.4 490.9L347.5 488.0L342.6 485.1L337.7 482.3L337.7 488.0L337.7 493.7L337.8 499.3L338.0 504.8L338.4 510.3L339.0 515.6L339.8 520.8L340.9 525.9L342.2 530.8L343.9 535.5L345.9 540.1L348.1 544.4L350.8 548.6L353.7 552.5L357.0 556.3L360.5 560.0L364.4 563.4L368.5 566.7L372.8 569.9L377.3 573.0L382.0 575.9L386.9 578.8L391.8 581.7z"/></clipPath><path d="M396.7 584.5L396.7 578.8L396.7 573.1L396.6 567.5L396.4 562.0L396.0 556.5L395.4 551.2L394.6 546.0L393.5 540.9L392.2 536.0L390.5 531.3L388.5 526.8L386.3 522.4L383.6 518.2L380.7 514.3L377.4 510.5L373.9 506.8L370.0 503.4L365.9 500.1L361.6 496.9L357.1 493.8L352.4 490.9L347.5 488.0L342.6 485.1L337.7 482.3L337.7 488.0L337.7 493.7L337.8 499.3L338.0 504.8L338.4 510.3L339.0 515.6L339.8 520.8L340.9 525.9L342.2 530.8L343.9 535.5L345.9 540.1L348.1 544.4L350.8 548.6L353.7 552.5L357.0 556.3L360.5 560.0L364.4 563.4L368.5 566.7L372.8 569.9L377.3 573.0L382.0 575.9L386.9 578.8L391.8 581.7z" fill="url(#lf5)"/><g clip-path="url(#lc5)" fill="none" stroke="#2b3f73" stroke-width="1.150"><path d="M396.7 584.5L337.7 482.3"/><path d="M379.0 553.8Q389.7 569.4 396.7 570.9"/><path d="M379.0 553.8Q387.1 570.9 384.9 577.7"/><path d="M373.1 543.6Q385.0 558.6 396.1 557.6"/><path d="M373.1 543.6Q380.1 561.4 373.7 570.5"/><path d="M367.2 533.4Q380.0 547.8 394.4 544.9"/><path d="M367.2 533.4Q373.2 551.7 363.6 562.7"/><path d="M361.3 523.2Q374.7 537.2 391.2 533.2"/><path d="M361.3 523.2Q366.8 541.8 355.0 554.1"/><path d="M354.2 510.9Q367.8 524.9 385.0 520.4"/><path d="M354.2 510.9Q359.5 529.7 347.0 542.3"/><path d="M347.1 498.7Q360.4 512.8 376.2 509.1"/><path d="M347.1 498.7Q352.8 517.2 341.7 529.1"/></g><path d="M396.7 584.5L396.7 578.8L396.7 573.1L396.6 567.5L396.4 562.0L396.0 556.5L395.4 551.2L394.6 546.0L393.5 540.9L392.2 536.0L390.5 531.3L388.5 526.8L386.3 522.4L383.6 518.2L380.7 514.3L377.4 510.5L373.9 506.8L370.0 503.4L365.9 500.1L361.6 496.9L357.1 493.8L352.4 490.9L347.5 488.0L342.6 485.1L337.7 482.3L337.7 488.0L337.7 493.7L337.8 499.3L338.0 504.8L338.4 510.3L339.0 515.6L339.8 520.8L340.9 525.9L342.2 530.8L343.9 535.5L345.9 540.1L348.1 544.4L350.8 548.6L353.7 552.5L357.0 556.3L360.5 560.0L364.4 563.4L368.5 566.7L372.8 569.9L377.3 573.0L382.0 575.9L386.9 578.8L391.8 581.7z" fill="none" stroke="#4850f0" stroke-width="3.100" stroke-linejoin="miter" stroke-miterlimit="8"/><linearGradient id="lf6" gradientUnits="userSpaceOnUse" x1="439.8" y1="559.0" x2="367.0" y2="499.0"><stop offset="0" stop-color="#cdb9e3"/><stop offset="1" stop-color="#a6d0b0"/></linearGradient><clipPath id="lc6"><path d="M444.4 562.8L442.5 557.4L440.6 552.0L438.6 546.6L436.5 541.4L434.3 536.4L432.0 531.5L429.4 526.8L426.7 522.4L423.8 518.3L420.6 514.4L417.2 510.8L413.5 507.5L409.6 504.5L405.4 501.9L401.0 499.5L396.4 497.4L391.5 495.6L386.5 494.0L381.2 492.6L375.8 491.4L370.3 490.3L364.7 489.4L359.1 488.6L353.3 487.7L355.2 493.2L357.1 498.6L359.1 503.9L361.2 509.1L363.4 514.2L365.8 519.1L368.3 523.7L371.0 528.1L374.0 532.3L377.2 536.2L380.6 539.7L384.2 543.0L388.2 546.0L392.3 548.7L396.7 551.0L401.4 553.2L406.2 555.0L411.3 556.6L416.5 558.0L421.9 559.2L427.4 560.2L433.0 561.1L438.7 562.0z"/></clipPath><path d="M444.4 562.8L442.5 557.4L440.6 552.0L438.6 546.6L436.5 541.4L434.3 536.4L432.0 531.5L429.4 526.8L426.7 522.4L423.8 518.3L420.6 514.4L417.2 510.8L413.5 507.5L409.6 504.5L405.4 501.9L401.0 499.5L396.4 497.4L391.5 495.6L386.5 494.0L381.2 492.6L375.8 491.4L370.3 490.3L364.7 489.4L359.1 488.6L353.3 487.7L355.2 493.2L357.1 498.6L359.1 503.9L361.2 509.1L363.4 514.2L365.8 519.1L368.3 523.7L371.0 528.1L374.0 532.3L377.2 536.2L380.6 539.7L384.2 543.0L388.2 546.0L392.3 548.7L396.7 551.0L401.4 553.2L406.2 555.0L411.3 556.6L416.5 558.0L421.9 559.2L427.4 560.2L433.0 561.1L438.7 562.0z" fill="url(#lf6)"/><g clip-path="url(#lc6)" fill="none" stroke="#2b3f73" stroke-width="1.150"><path d="M444.4 562.8L353.3 487.7"/><path d="M417.1 540.3Q432.6 551.1 439.8 549.8"/><path d="M417.1 540.3Q430.7 553.5 430.8 560.8"/><path d="M408.0 532.8Q424.4 542.5 434.8 537.4"/><path d="M408.0 532.8Q420.7 547.1 417.6 558.2"/><path d="M398.9 525.3Q416.0 534.1 428.9 525.9"/><path d="M398.9 525.3Q410.8 540.4 405.2 554.6"/><path d="M389.8 517.8Q407.4 526.1 421.9 515.9"/><path d="M389.8 517.8Q401.3 533.5 394.1 549.7"/><path d="M378.8 508.8Q396.6 516.9 411.7 506.1"/><path d="M378.8 508.8Q390.2 524.7 382.5 541.5"/><path d="M367.9 499.8Q385.4 508.2 399.4 498.7"/><path d="M367.9 499.8Q379.6 515.3 372.9 530.8"/></g><path d="M444.4 562.8L442.5 557.4L440.6 552.0L438.6 546.6L436.5 541.4L434.3 536.4L432.0 531.5L429.4 526.8L426.7 522.4L423.8 518.3L420.6 514.4L417.2 510.8L413.5 507.5L409.6 504.5L405.4 501.9L401.0 499.5L396.4 497.4L391.5 495.6L386.5 494.0L381.2 492.6L375.8 491.4L370.3 490.3L364.7 489.4L359.1 488.6L353.3 487.7L355.2 493.2L357.1 498.6L359.1 503.9L361.2 509.1L363.4 514.2L365.8 519.1L368.3 523.7L371.0 528.1L374.0 532.3L377.2 536.2L380.6 539.7L384.2 543.0L388.2 546.0L392.3 548.7L396.7 551.0L401.4 553.2L406.2 555.0L411.3 556.6L416.5 558.0L421.9 559.2L427.4 560.2L433.0 561.1L438.7 562.0z" fill="none" stroke="#4850f0" stroke-width="3.100" stroke-linejoin="miter" stroke-miterlimit="8"/><g fill="#4850f0" stroke="#4850f0" stroke-width="5" stroke-linejoin="round"><path d="M0 -11.68C7.67 -17.34 6.34 -29.78 0 -34.31C-6.34 -29.78 -7.67 -17.34 0 -11.68z" transform="translate(320.3 391.8) rotate(15.25)"/><path d="M0 -11.68C7.67 -17.34 6.34 -29.78 0 -34.31C-6.34 -29.78 -7.67 -17.34 0 -11.68z" transform="translate(320.3 391.8) rotate(37.75)"/><path d="M0 -11.68C7.67 -17.34 6.34 -29.78 0 -34.31C-6.34 -29.78 -7.67 -17.34 0 -11.68z" transform="translate(320.3 391.8) rotate(60.25)"/><path d="M0 -11.68C7.67 -17.34 6.34 -29.78 0 -34.31C-6.34 -29.78 -7.67 -17.34 0 -11.68z" transform="translate(320.3 391.8) rotate(82.75)"/><path d="M0 -11.68C7.67 -17.34 6.34 -29.78 0 -34.31C-6.34 -29.78 -7.67 -17.34 0 -11.68z" transform="translate(320.3 391.8) rotate(105.25)"/><path d="M0 -11.68C7.67 -17.34 6.34 -29.78 0 -34.31C-6.34 -29.78 -7.67 -17.34 0 -11.68z" transform="translate(320.3 391.8) rotate(127.75)"/><path d="M0 -11.68C7.67 -17.34 6.34 -29.78 0 -34.31C-6.34 -29.78 -7.67 -17.34 0 -11.68z" transform="translate(320.3 391.8) rotate(150.25)"/><path d="M0 -11.68C7.67 -17.34 6.34 -29.78 0 -34.31C-6.34 -29.78 -7.67 -17.34 0 -11.68z" transform="translate(320.3 391.8) rotate(172.75)"/><path d="M0 -11.68C7.67 -17.34 6.34 -29.78 0 -34.31C-6.34 -29.78 -7.67 -17.34 0 -11.68z" transform="translate(320.3 391.8) rotate(195.25)"/><path d="M0 -11.68C7.67 -17.34 6.34 -29.78 0 -34.31C-6.34 -29.78 -7.67 -17.34 0 -11.68z" transform="translate(320.3 391.8) rotate(217.75)"/><path d="M0 -11.68C7.67 -17.34 6.34 -29.78 0 -34.31C-6.34 -29.78 -7.67 -17.34 0 -11.68z" transform="translate(320.3 391.8) rotate(240.25)"/><path d="M0 -11.68C7.67 -17.34 6.34 -29.78 0 -34.31C-6.34 -29.78 -7.67 -17.34 0 -11.68z" transform="translate(320.3 391.8) rotate(262.75)"/><path d="M0 -11.68C7.67 -17.34 6.34 -29.78 0 -34.31C-6.34 -29.78 -7.67 -17.34 0 -11.68z" transform="translate(320.3 391.8) rotate(285.25)"/><path d="M0 -11.68C7.67 -17.34 6.34 -29.78 0 -34.31C-6.34 -29.78 -7.67 -17.34 0 -11.68z" transform="translate(320.3 391.8) rotate(307.75)"/><path d="M0 -11.68C7.67 -17.34 6.34 -29.78 0 -34.31C-6.34 -29.78 -7.67 -17.34 0 -11.68z" transform="translate(320.3 391.8) rotate(330.25)"/><path d="M0 -11.68C7.67 -17.34 6.34 -29.78 0 -34.31C-6.34 -29.78 -7.67 -17.34 0 -11.68z" transform="translate(320.3 391.8) rotate(352.75)"/></g><g fill="#4850f0" stroke="#4850f0" stroke-width="5" stroke-linejoin="round"><path d="M0 -11.68C7.39 -17.88 6.11 -31.54 0 -36.50C-6.11 -31.54 -7.39 -17.88 0 -11.68z" transform="translate(320.3 391.8) rotate(4.00)"/><path d="M0 -11.68C7.39 -17.88 6.11 -31.54 0 -36.50C-6.11 -31.54 -7.39 -17.88 0 -11.68z" transform="translate(320.3 391.8) rotate(26.50)"/><path d="M0 -11.68C7.39 -17.88 6.11 -31.54 0 -36.50C-6.11 -31.54 -7.39 -17.88 0 -11.68z" transform="translate(320.3 391.8) rotate(49.00)"/><path d="M0 -11.68C7.39 -17.88 6.11 -31.54 0 -36.50C-6.11 -31.54 -7.39 -17.88 0 -11.68z" transform="translate(320.3 391.8) rotate(71.50)"/><path d="M0 -11.68C7.39 -17.88 6.11 -31.54 0 -36.50C-6.11 -31.54 -7.39 -17.88 0 -11.68z" transform="translate(320.3 391.8) rotate(94.00)"/><path d="M0 -11.68C7.39 -17.88 6.11 -31.54 0 -36.50C-6.11 -31.54 -7.39 -17.88 0 -11.68z" transform="translate(320.3 391.8) rotate(116.50)"/><path d="M0 -11.68C7.39 -17.88 6.11 -31.54 0 -36.50C-6.11 -31.54 -7.39 -17.88 0 -11.68z" transform="translate(320.3 391.8) rotate(139.00)"/><path d="M0 -11.68C7.39 -17.88 6.11 -31.54 0 -36.50C-6.11 -31.54 -7.39 -17.88 0 -11.68z" transform="translate(320.3 391.8) rotate(161.50)"/><path d="M0 -11.68C7.39 -17.88 6.11 -31.54 0 -36.50C-6.11 -31.54 -7.39 -17.88 0 -11.68z" transform="translate(320.3 391.8) rotate(184.00)"/><path d="M0 -11.68C7.39 -17.88 6.11 -31.54 0 -36.50C-6.11 -31.54 -7.39 -17.88 0 -11.68z" transform="translate(320.3 391.8) rotate(206.50)"/><path d="M0 -11.68C7.39 -17.88 6.11 -31.54 0 -36.50C-6.11 -31.54 -7.39 -17.88 0 -11.68z" transform="translate(320.3 391.8) rotate(229.00)"/><path d="M0 -11.68C7.39 -17.88 6.11 -31.54 0 -36.50C-6.11 -31.54 -7.39 -17.88 0 -11.68z" transform="translate(320.3 391.8) rotate(251.50)"/><path d="M0 -11.68C7.39 -17.88 6.11 -31.54 0 -36.50C-6.11 -31.54 -7.39 -17.88 0 -11.68z" transform="translate(320.3 391.8) rotate(274.00)"/><path d="M0 -11.68C7.39 -17.88 6.11 -31.54 0 -36.50C-6.11 -31.54 -7.39 -17.88 0 -11.68z" transform="translate(320.3 391.8) rotate(296.50)"/><path d="M0 -11.68C7.39 -17.88 6.11 -31.54 0 -36.50C-6.11 -31.54 -7.39 -17.88 0 -11.68z" transform="translate(320.3 391.8) rotate(319.00)"/><path d="M0 -11.68C7.39 -17.88 6.11 -31.54 0 -36.50C-6.11 -31.54 -7.39 -17.88 0 -11.68z" transform="translate(320.3 391.8) rotate(341.50)"/></g><circle cx="320.3" cy="391.8" r="26.28" fill="#4850f0"/><circle cx="320.3" cy="391.8" r="21.90" fill="#f58ea5"/><g fill="#f797ab" stroke="#ec6c88" stroke-width="1.0" stroke-linejoin="round"><path d="M0 -11.68C7.67 -17.34 6.34 -29.78 0 -34.31C-6.34 -29.78 -7.67 -17.34 0 -11.68z" transform="translate(320.3 391.8) rotate(15.25)"/><path d="M0 -11.68C7.67 -17.34 6.34 -29.78 0 -34.31C-6.34 -29.78 -7.67 -17.34 0 -11.68z" transform="translate(320.3 391.8) rotate(37.75)"/><path d="M0 -11.68C7.67 -17.34 6.34 -29.78 0 -34.31C-6.34 -29.78 -7.67 -17.34 0 -11.68z" transform="translate(320.3 391.8) rotate(60.25)"/><path d="M0 -11.68C7.67 -17.34 6.34 -29.78 0 -34.31C-6.34 -29.78 -7.67 -17.34 0 -11.68z" transform="translate(320.3 391.8) rotate(82.75)"/><path d="M0 -11.68C7.67 -17.34 6.34 -29.78 0 -34.31C-6.34 -29.78 -7.67 -17.34 0 -11.68z" transform="translate(320.3 391.8) rotate(105.25)"/><path d="M0 -11.68C7.67 -17.34 6.34 -29.78 0 -34.31C-6.34 -29.78 -7.67 -17.34 0 -11.68z" transform="translate(320.3 391.8) rotate(127.75)"/><path d="M0 -11.68C7.67 -17.34 6.34 -29.78 0 -34.31C-6.34 -29.78 -7.67 -17.34 0 -11.68z" transform="translate(320.3 391.8) rotate(150.25)"/><path d="M0 -11.68C7.67 -17.34 6.34 -29.78 0 -34.31C-6.34 -29.78 -7.67 -17.34 0 -11.68z" transform="translate(320.3 391.8) rotate(172.75)"/><path d="M0 -11.68C7.67 -17.34 6.34 -29.78 0 -34.31C-6.34 -29.78 -7.67 -17.34 0 -11.68z" transform="translate(320.3 391.8) rotate(195.25)"/><path d="M0 -11.68C7.67 -17.34 6.34 -29.78 0 -34.31C-6.34 -29.78 -7.67 -17.34 0 -11.68z" transform="translate(320.3 391.8) rotate(217.75)"/><path d="M0 -11.68C7.67 -17.34 6.34 -29.78 0 -34.31C-6.34 -29.78 -7.67 -17.34 0 -11.68z" transform="translate(320.3 391.8) rotate(240.25)"/><path d="M0 -11.68C7.67 -17.34 6.34 -29.78 0 -34.31C-6.34 -29.78 -7.67 -17.34 0 -11.68z" transform="translate(320.3 391.8) rotate(262.75)"/><path d="M0 -11.68C7.67 -17.34 6.34 -29.78 0 -34.31C-6.34 -29.78 -7.67 -17.34 0 -11.68z" transform="translate(320.3 391.8) rotate(285.25)"/><path d="M0 -11.68C7.67 -17.34 6.34 -29.78 0 -34.31C-6.34 -29.78 -7.67 -17.34 0 -11.68z" transform="translate(320.3 391.8) rotate(307.75)"/><path d="M0 -11.68C7.67 -17.34 6.34 -29.78 0 -34.31C-6.34 -29.78 -7.67 -17.34 0 -11.68z" transform="translate(320.3 391.8) rotate(330.25)"/><path d="M0 -11.68C7.67 -17.34 6.34 -29.78 0 -34.31C-6.34 -29.78 -7.67 -17.34 0 -11.68z" transform="translate(320.3 391.8) rotate(352.75)"/></g><g fill="#fdc0ca" stroke="#ec6c88" stroke-width="1.1" stroke-linejoin="round"><path d="M0 -11.68C7.39 -17.88 6.11 -31.54 0 -36.50C-6.11 -31.54 -7.39 -17.88 0 -11.68z" transform="translate(320.3 391.8) rotate(4.00)"/><path d="M0 -11.68C7.39 -17.88 6.11 -31.54 0 -36.50C-6.11 -31.54 -7.39 -17.88 0 -11.68z" transform="translate(320.3 391.8) rotate(26.50)"/><path d="M0 -11.68C7.39 -17.88 6.11 -31.54 0 -36.50C-6.11 -31.54 -7.39 -17.88 0 -11.68z" transform="translate(320.3 391.8) rotate(49.00)"/><path d="M0 -11.68C7.39 -17.88 6.11 -31.54 0 -36.50C-6.11 -31.54 -7.39 -17.88 0 -11.68z" transform="translate(320.3 391.8) rotate(71.50)"/><path d="M0 -11.68C7.39 -17.88 6.11 -31.54 0 -36.50C-6.11 -31.54 -7.39 -17.88 0 -11.68z" transform="translate(320.3 391.8) rotate(94.00)"/><path d="M0 -11.68C7.39 -17.88 6.11 -31.54 0 -36.50C-6.11 -31.54 -7.39 -17.88 0 -11.68z" transform="translate(320.3 391.8) rotate(116.50)"/><path d="M0 -11.68C7.39 -17.88 6.11 -31.54 0 -36.50C-6.11 -31.54 -7.39 -17.88 0 -11.68z" transform="translate(320.3 391.8) rotate(139.00)"/><path d="M0 -11.68C7.39 -17.88 6.11 -31.54 0 -36.50C-6.11 -31.54 -7.39 -17.88 0 -11.68z" transform="translate(320.3 391.8) rotate(161.50)"/><path d="M0 -11.68C7.39 -17.88 6.11 -31.54 0 -36.50C-6.11 -31.54 -7.39 -17.88 0 -11.68z" transform="translate(320.3 391.8) rotate(184.00)"/><path d="M0 -11.68C7.39 -17.88 6.11 -31.54 0 -36.50C-6.11 -31.54 -7.39 -17.88 0 -11.68z" transform="translate(320.3 391.8) rotate(206.50)"/><path d="M0 -11.68C7.39 -17.88 6.11 -31.54 0 -36.50C-6.11 -31.54 -7.39 -17.88 0 -11.68z" transform="translate(320.3 391.8) rotate(229.00)"/><path d="M0 -11.68C7.39 -17.88 6.11 -31.54 0 -36.50C-6.11 -31.54 -7.39 -17.88 0 -11.68z" transform="translate(320.3 391.8) rotate(251.50)"/><path d="M0 -11.68C7.39 -17.88 6.11 -31.54 0 -36.50C-6.11 -31.54 -7.39 -17.88 0 -11.68z" transform="translate(320.3 391.8) rotate(274.00)"/><path d="M0 -11.68C7.39 -17.88 6.11 -31.54 0 -36.50C-6.11 -31.54 -7.39 -17.88 0 -11.68z" transform="translate(320.3 391.8) rotate(296.50)"/><path d="M0 -11.68C7.39 -17.88 6.11 -31.54 0 -36.50C-6.11 -31.54 -7.39 -17.88 0 -11.68z" transform="translate(320.3 391.8) rotate(319.00)"/><path d="M0 -11.68C7.39 -17.88 6.11 -31.54 0 -36.50C-6.11 -31.54 -7.39 -17.88 0 -11.68z" transform="translate(320.3 391.8) rotate(341.50)"/></g><circle cx="320.3" cy="391.8" r="14.96" fill="#d9a762" stroke="#c58e47" stroke-width="1"/><circle cx="320.3" cy="391.8" r="6.75" fill="#e6c781" stroke="#cfa052" stroke-width=".9"/><g fill="#4850f0" stroke="#4850f0" stroke-width="5" stroke-linejoin="round"><path d="M0 -13.22C8.67 -19.62 7.17 -33.70 0 -38.82C-7.17 -33.70 -8.67 -19.62 0 -13.22z" transform="translate(272.8 528.4) rotate(15.25)"/><path d="M0 -13.22C8.67 -19.62 7.17 -33.70 0 -38.82C-7.17 -33.70 -8.67 -19.62 0 -13.22z" transform="translate(272.8 528.4) rotate(37.75)"/><path d="M0 -13.22C8.67 -19.62 7.17 -33.70 0 -38.82C-7.17 -33.70 -8.67 -19.62 0 -13.22z" transform="translate(272.8 528.4) rotate(60.25)"/><path d="M0 -13.22C8.67 -19.62 7.17 -33.70 0 -38.82C-7.17 -33.70 -8.67 -19.62 0 -13.22z" transform="translate(272.8 528.4) rotate(82.75)"/><path d="M0 -13.22C8.67 -19.62 7.17 -33.70 0 -38.82C-7.17 -33.70 -8.67 -19.62 0 -13.22z" transform="translate(272.8 528.4) rotate(105.25)"/><path d="M0 -13.22C8.67 -19.62 7.17 -33.70 0 -38.82C-7.17 -33.70 -8.67 -19.62 0 -13.22z" transform="translate(272.8 528.4) rotate(127.75)"/><path d="M0 -13.22C8.67 -19.62 7.17 -33.70 0 -38.82C-7.17 -33.70 -8.67 -19.62 0 -13.22z" transform="translate(272.8 528.4) rotate(150.25)"/><path d="M0 -13.22C8.67 -19.62 7.17 -33.70 0 -38.82C-7.17 -33.70 -8.67 -19.62 0 -13.22z" transform="translate(272.8 528.4) rotate(172.75)"/><path d="M0 -13.22C8.67 -19.62 7.17 -33.70 0 -38.82C-7.17 -33.70 -8.67 -19.62 0 -13.22z" transform="translate(272.8 528.4) rotate(195.25)"/><path d="M0 -13.22C8.67 -19.62 7.17 -33.70 0 -38.82C-7.17 -33.70 -8.67 -19.62 0 -13.22z" transform="translate(272.8 528.4) rotate(217.75)"/><path d="M0 -13.22C8.67 -19.62 7.17 -33.70 0 -38.82C-7.17 -33.70 -8.67 -19.62 0 -13.22z" transform="translate(272.8 528.4) rotate(240.25)"/><path d="M0 -13.22C8.67 -19.62 7.17 -33.70 0 -38.82C-7.17 -33.70 -8.67 -19.62 0 -13.22z" transform="translate(272.8 528.4) rotate(262.75)"/><path d="M0 -13.22C8.67 -19.62 7.17 -33.70 0 -38.82C-7.17 -33.70 -8.67 -19.62 0 -13.22z" transform="translate(272.8 528.4) rotate(285.25)"/><path d="M0 -13.22C8.67 -19.62 7.17 -33.70 0 -38.82C-7.17 -33.70 -8.67 -19.62 0 -13.22z" transform="translate(272.8 528.4) rotate(307.75)"/><path d="M0 -13.22C8.67 -19.62 7.17 -33.70 0 -38.82C-7.17 -33.70 -8.67 -19.62 0 -13.22z" transform="translate(272.8 528.4) rotate(330.25)"/><path d="M0 -13.22C8.67 -19.62 7.17 -33.70 0 -38.82C-7.17 -33.70 -8.67 -19.62 0 -13.22z" transform="translate(272.8 528.4) rotate(352.75)"/></g><g fill="#4850f0" stroke="#4850f0" stroke-width="5" stroke-linejoin="round"><path d="M0 -13.22C8.36 -20.24 6.91 -35.68 0 -41.30C-6.91 -35.68 -8.36 -20.24 0 -13.22z" transform="translate(272.8 528.4) rotate(4.00)"/><path d="M0 -13.22C8.36 -20.24 6.91 -35.68 0 -41.30C-6.91 -35.68 -8.36 -20.24 0 -13.22z" transform="translate(272.8 528.4) rotate(26.50)"/><path d="M0 -13.22C8.36 -20.24 6.91 -35.68 0 -41.30C-6.91 -35.68 -8.36 -20.24 0 -13.22z" transform="translate(272.8 528.4) rotate(49.00)"/><path d="M0 -13.22C8.36 -20.24 6.91 -35.68 0 -41.30C-6.91 -35.68 -8.36 -20.24 0 -13.22z" transform="translate(272.8 528.4) rotate(71.50)"/><path d="M0 -13.22C8.36 -20.24 6.91 -35.68 0 -41.30C-6.91 -35.68 -8.36 -20.24 0 -13.22z" transform="translate(272.8 528.4) rotate(94.00)"/><path d="M0 -13.22C8.36 -20.24 6.91 -35.68 0 -41.30C-6.91 -35.68 -8.36 -20.24 0 -13.22z" transform="translate(272.8 528.4) rotate(116.50)"/><path d="M0 -13.22C8.36 -20.24 6.91 -35.68 0 -41.30C-6.91 -35.68 -8.36 -20.24 0 -13.22z" transform="translate(272.8 528.4) rotate(139.00)"/><path d="M0 -13.22C8.36 -20.24 6.91 -35.68 0 -41.30C-6.91 -35.68 -8.36 -20.24 0 -13.22z" transform="translate(272.8 528.4) rotate(161.50)"/><path d="M0 -13.22C8.36 -20.24 6.91 -35.68 0 -41.30C-6.91 -35.68 -8.36 -20.24 0 -13.22z" transform="translate(272.8 528.4) rotate(184.00)"/><path d="M0 -13.22C8.36 -20.24 6.91 -35.68 0 -41.30C-6.91 -35.68 -8.36 -20.24 0 -13.22z" transform="translate(272.8 528.4) rotate(206.50)"/><path d="M0 -13.22C8.36 -20.24 6.91 -35.68 0 -41.30C-6.91 -35.68 -8.36 -20.24 0 -13.22z" transform="translate(272.8 528.4) rotate(229.00)"/><path d="M0 -13.22C8.36 -20.24 6.91 -35.68 0 -41.30C-6.91 -35.68 -8.36 -20.24 0 -13.22z" transform="translate(272.8 528.4) rotate(251.50)"/><path d="M0 -13.22C8.36 -20.24 6.91 -35.68 0 -41.30C-6.91 -35.68 -8.36 -20.24 0 -13.22z" transform="translate(272.8 528.4) rotate(274.00)"/><path d="M0 -13.22C8.36 -20.24 6.91 -35.68 0 -41.30C-6.91 -35.68 -8.36 -20.24 0 -13.22z" transform="translate(272.8 528.4) rotate(296.50)"/><path d="M0 -13.22C8.36 -20.24 6.91 -35.68 0 -41.30C-6.91 -35.68 -8.36 -20.24 0 -13.22z" transform="translate(272.8 528.4) rotate(319.00)"/><path d="M0 -13.22C8.36 -20.24 6.91 -35.68 0 -41.30C-6.91 -35.68 -8.36 -20.24 0 -13.22z" transform="translate(272.8 528.4) rotate(341.50)"/></g><circle cx="272.8" cy="528.4" r="29.74" fill="#4850f0"/><circle cx="272.8" cy="528.4" r="24.78" fill="#f58ea5"/><g fill="#f797ab" stroke="#ec6c88" stroke-width="1.0" stroke-linejoin="round"><path d="M0 -13.22C8.67 -19.62 7.17 -33.70 0 -38.82C-7.17 -33.70 -8.67 -19.62 0 -13.22z" transform="translate(272.8 528.4) rotate(15.25)"/><path d="M0 -13.22C8.67 -19.62 7.17 -33.70 0 -38.82C-7.17 -33.70 -8.67 -19.62 0 -13.22z" transform="translate(272.8 528.4) rotate(37.75)"/><path d="M0 -13.22C8.67 -19.62 7.17 -33.70 0 -38.82C-7.17 -33.70 -8.67 -19.62 0 -13.22z" transform="translate(272.8 528.4) rotate(60.25)"/><path d="M0 -13.22C8.67 -19.62 7.17 -33.70 0 -38.82C-7.17 -33.70 -8.67 -19.62 0 -13.22z" transform="translate(272.8 528.4) rotate(82.75)"/><path d="M0 -13.22C8.67 -19.62 7.17 -33.70 0 -38.82C-7.17 -33.70 -8.67 -19.62 0 -13.22z" transform="translate(272.8 528.4) rotate(105.25)"/><path d="M0 -13.22C8.67 -19.62 7.17 -33.70 0 -38.82C-7.17 -33.70 -8.67 -19.62 0 -13.22z" transform="translate(272.8 528.4) rotate(127.75)"/><path d="M0 -13.22C8.67 -19.62 7.17 -33.70 0 -38.82C-7.17 -33.70 -8.67 -19.62 0 -13.22z" transform="translate(272.8 528.4) rotate(150.25)"/><path d="M0 -13.22C8.67 -19.62 7.17 -33.70 0 -38.82C-7.17 -33.70 -8.67 -19.62 0 -13.22z" transform="translate(272.8 528.4) rotate(172.75)"/><path d="M0 -13.22C8.67 -19.62 7.17 -33.70 0 -38.82C-7.17 -33.70 -8.67 -19.62 0 -13.22z" transform="translate(272.8 528.4) rotate(195.25)"/><path d="M0 -13.22C8.67 -19.62 7.17 -33.70 0 -38.82C-7.17 -33.70 -8.67 -19.62 0 -13.22z" transform="translate(272.8 528.4) rotate(217.75)"/><path d="M0 -13.22C8.67 -19.62 7.17 -33.70 0 -38.82C-7.17 -33.70 -8.67 -19.62 0 -13.22z" transform="translate(272.8 528.4) rotate(240.25)"/><path d="M0 -13.22C8.67 -19.62 7.17 -33.70 0 -38.82C-7.17 -33.70 -8.67 -19.62 0 -13.22z" transform="translate(272.8 528.4) rotate(262.75)"/><path d="M0 -13.22C8.67 -19.62 7.17 -33.70 0 -38.82C-7.17 -33.70 -8.67 -19.62 0 -13.22z" transform="translate(272.8 528.4) rotate(285.25)"/><path d="M0 -13.22C8.67 -19.62 7.17 -33.70 0 -38.82C-7.17 -33.70 -8.67 -19.62 0 -13.22z" transform="translate(272.8 528.4) rotate(307.75)"/><path d="M0 -13.22C8.67 -19.62 7.17 -33.70 0 -38.82C-7.17 -33.70 -8.67 -19.62 0 -13.22z" transform="translate(272.8 528.4) rotate(330.25)"/><path d="M0 -13.22C8.67 -19.62 7.17 -33.70 0 -38.82C-7.17 -33.70 -8.67 -19.62 0 -13.22z" transform="translate(272.8 528.4) rotate(352.75)"/></g><g fill="#fdc0ca" stroke="#ec6c88" stroke-width="1.1" stroke-linejoin="round"><path d="M0 -13.22C8.36 -20.24 6.91 -35.68 0 -41.30C-6.91 -35.68 -8.36 -20.24 0 -13.22z" transform="translate(272.8 528.4) rotate(4.00)"/><path d="M0 -13.22C8.36 -20.24 6.91 -35.68 0 -41.30C-6.91 -35.68 -8.36 -20.24 0 -13.22z" transform="translate(272.8 528.4) rotate(26.50)"/><path d="M0 -13.22C8.36 -20.24 6.91 -35.68 0 -41.30C-6.91 -35.68 -8.36 -20.24 0 -13.22z" transform="translate(272.8 528.4) rotate(49.00)"/><path d="M0 -13.22C8.36 -20.24 6.91 -35.68 0 -41.30C-6.91 -35.68 -8.36 -20.24 0 -13.22z" transform="translate(272.8 528.4) rotate(71.50)"/><path d="M0 -13.22C8.36 -20.24 6.91 -35.68 0 -41.30C-6.91 -35.68 -8.36 -20.24 0 -13.22z" transform="translate(272.8 528.4) rotate(94.00)"/><path d="M0 -13.22C8.36 -20.24 6.91 -35.68 0 -41.30C-6.91 -35.68 -8.36 -20.24 0 -13.22z" transform="translate(272.8 528.4) rotate(116.50)"/><path d="M0 -13.22C8.36 -20.24 6.91 -35.68 0 -41.30C-6.91 -35.68 -8.36 -20.24 0 -13.22z" transform="translate(272.8 528.4) rotate(139.00)"/><path d="M0 -13.22C8.36 -20.24 6.91 -35.68 0 -41.30C-6.91 -35.68 -8.36 -20.24 0 -13.22z" transform="translate(272.8 528.4) rotate(161.50)"/><path d="M0 -13.22C8.36 -20.24 6.91 -35.68 0 -41.30C-6.91 -35.68 -8.36 -20.24 0 -13.22z" transform="translate(272.8 528.4) rotate(184.00)"/><path d="M0 -13.22C8.36 -20.24 6.91 -35.68 0 -41.30C-6.91 -35.68 -8.36 -20.24 0 -13.22z" transform="translate(272.8 528.4) rotate(206.50)"/><path d="M0 -13.22C8.36 -20.24 6.91 -35.68 0 -41.30C-6.91 -35.68 -8.36 -20.24 0 -13.22z" transform="translate(272.8 528.4) rotate(229.00)"/><path d="M0 -13.22C8.36 -20.24 6.91 -35.68 0 -41.30C-6.91 -35.68 -8.36 -20.24 0 -13.22z" transform="translate(272.8 528.4) rotate(251.50)"/><path d="M0 -13.22C8.36 -20.24 6.91 -35.68 0 -41.30C-6.91 -35.68 -8.36 -20.24 0 -13.22z" transform="translate(272.8 528.4) rotate(274.00)"/><path d="M0 -13.22C8.36 -20.24 6.91 -35.68 0 -41.30C-6.91 -35.68 -8.36 -20.24 0 -13.22z" transform="translate(272.8 528.4) rotate(296.50)"/><path d="M0 -13.22C8.36 -20.24 6.91 -35.68 0 -41.30C-6.91 -35.68 -8.36 -20.24 0 -13.22z" transform="translate(272.8 528.4) rotate(319.00)"/><path d="M0 -13.22C8.36 -20.24 6.91 -35.68 0 -41.30C-6.91 -35.68 -8.36 -20.24 0 -13.22z" transform="translate(272.8 528.4) rotate(341.50)"/></g><circle cx="272.8" cy="528.4" r="16.93" fill="#d9a762" stroke="#c58e47" stroke-width="1"/><circle cx="272.8" cy="528.4" r="7.64" fill="#e6c781" stroke="#cfa052" stroke-width=".9"/><rect x="198" y="407" width="232" height="106" fill="#4850f0"/><rect x="193.700" y="401.700" width="229.600" height="103.600" fill="#d5f8f6" stroke="#4850f0" stroke-width="3.400"/><rect x="212" y="439.5" width="47" height="11.5" fill="#000"/><rect x="357.5" y="439.5" width="46.5" height="11.5" fill="#000"/><path d="M293.5 438.7Q308.2 432.2 323.0 438.7" fill="none" stroke="#000" stroke-width="5.04"/><circle cx="259" cy="453.5" r="34.50" fill="url(#lg1)" stroke="#000" stroke-width="7"/><circle cx="357.5" cy="453.5" r="34.50" fill="url(#rg1)" stroke="#000" stroke-width="7"/><clipPath id="cp259453"><circle cx="259" cy="453.5" r="31.30"/></clipPath><g clip-path="url(#cp259453)"><rect x="227.7" y="443.50" width="62.60" height="6.50" fill="#000"/><rect x="227.7" y="454.50" width="62.60" height="6.50" fill="#000"/><rect x="227.7" y="465.50" width="62.60" height="6.50" fill="#000"/><rect x="227.7" y="476.50" width="62.60" height="6.50" fill="#000"/></g><path d="M357.5 437.3Q361.174 450.326 374.2 454.0Q361.174 457.674 357.5 470.7Q353.826 457.674 340.8 454.0Q353.826 450.326 357.5 437.3z" fill="#fff"/><path d="M210 322Q211.1 325.9 215 327Q211.1 328.1 210 332Q208.9 328.1 205 327Q208.9 325.9 210 322z" fill="#fff"/><path d="M325.4 328Q326.94 333.46 332.4 335Q326.94 336.54 325.4 342Q323.85999999999996 336.54 318.4 335Q323.85999999999996 333.46 325.4 328z" fill="#fff"/><path d="M186.6 382Q188.14 387.46 193.6 389Q188.14 390.54 186.6 396Q185.06 390.54 179.6 389Q185.06 387.46 186.6 382z" fill="#fff"/><path d="M381.2 375.3Q382.63 380.37 387.7 381.8Q382.63 383.23 381.2 388.3Q379.77 383.23 374.7 381.8Q379.77 380.37 381.2 375.3z" fill="#fff"/><path d="M445 511.1Q446.43 516.1700000000001 451.5 517.6Q446.43 519.03 445 524.1Q443.57 519.03 438.5 517.6Q443.57 516.1700000000001 445 511.1z" fill="#fff"/><path d="M212.4 520.5Q213.72 525.18 218.4 526.5Q213.72 527.82 212.4 532.5Q211.08 527.82 206.4 526.5Q211.08 525.18 212.4 520.5z" fill="#fff"/><path d="M307.4 568.1Q308.83 573.1700000000001 313.9 574.6Q308.83 576.03 307.4 581.1Q305.96999999999997 576.03 300.9 574.6Q305.96999999999997 573.1700000000001 307.4 568.1z" fill="#fff"/><path d="M291.8 574.1Q292.79 577.61 296.3 578.6Q292.79 579.59 291.8 583.1Q290.81 579.59 287.3 578.6Q290.81 577.61 291.8 574.1z" fill="#fff"/><path d="M417.4 572.8Q418.39 576.31 421.9 577.3Q418.39 578.29 417.4 581.8Q416.40999999999997 578.29 412.9 577.3Q416.40999999999997 576.31 417.4 572.8z" fill="#fff"/><rect x="548" y="292" width="315" height="113.300" fill="#bcb9b9"/><rect x="544" y="289" width="94" height="112" fill="#c9d0ee"/><rect x="544" y="289" width="94" height="112" fill="url(#dotsL)"/><rect x="638" y="289" width="219" height="112" fill="#d6f9f6"/><rect x="638" y="289" width="219" height="112" fill="url(#dotsR)"/><rect x="544.100" y="289" width="312.100" height="111.500" fill="none" stroke="#000" stroke-width="3.600"/><rect x="636" y="288" width="3.400" height="113" fill="#000"/><g fill="#000" stroke="#000" stroke-width="6.6" stroke-linejoin="round"><path d="M0 -11.42C7.50 -16.96 6.20 -29.13 0 -33.56C-6.20 -29.13 -7.50 -16.96 0 -11.42z" transform="translate(590.5 344.2) rotate(11.25)"/><path d="M0 -11.42C7.50 -16.96 6.20 -29.13 0 -33.56C-6.20 -29.13 -7.50 -16.96 0 -11.42z" transform="translate(590.5 344.2) rotate(33.75)"/><path d="M0 -11.42C7.50 -16.96 6.20 -29.13 0 -33.56C-6.20 -29.13 -7.50 -16.96 0 -11.42z" transform="translate(590.5 344.2) rotate(56.25)"/><path d="M0 -11.42C7.50 -16.96 6.20 -29.13 0 -33.56C-6.20 -29.13 -7.50 -16.96 0 -11.42z" transform="translate(590.5 344.2) rotate(78.75)"/><path d="M0 -11.42C7.50 -16.96 6.20 -29.13 0 -33.56C-6.20 -29.13 -7.50 -16.96 0 -11.42z" transform="translate(590.5 344.2) rotate(101.25)"/><path d="M0 -11.42C7.50 -16.96 6.20 -29.13 0 -33.56C-6.20 -29.13 -7.50 -16.96 0 -11.42z" transform="translate(590.5 344.2) rotate(123.75)"/><path d="M0 -11.42C7.50 -16.96 6.20 -29.13 0 -33.56C-6.20 -29.13 -7.50 -16.96 0 -11.42z" transform="translate(590.5 344.2) rotate(146.25)"/><path d="M0 -11.42C7.50 -16.96 6.20 -29.13 0 -33.56C-6.20 -29.13 -7.50 -16.96 0 -11.42z" transform="translate(590.5 344.2) rotate(168.75)"/><path d="M0 -11.42C7.50 -16.96 6.20 -29.13 0 -33.56C-6.20 -29.13 -7.50 -16.96 0 -11.42z" transform="translate(590.5 344.2) rotate(191.25)"/><path d="M0 -11.42C7.50 -16.96 6.20 -29.13 0 -33.56C-6.20 -29.13 -7.50 -16.96 0 -11.42z" transform="translate(590.5 344.2) rotate(213.75)"/><path d="M0 -11.42C7.50 -16.96 6.20 -29.13 0 -33.56C-6.20 -29.13 -7.50 -16.96 0 -11.42z" transform="translate(590.5 344.2) rotate(236.25)"/><path d="M0 -11.42C7.50 -16.96 6.20 -29.13 0 -33.56C-6.20 -29.13 -7.50 -16.96 0 -11.42z" transform="translate(590.5 344.2) rotate(258.75)"/><path d="M0 -11.42C7.50 -16.96 6.20 -29.13 0 -33.56C-6.20 -29.13 -7.50 -16.96 0 -11.42z" transform="translate(590.5 344.2) rotate(281.25)"/><path d="M0 -11.42C7.50 -16.96 6.20 -29.13 0 -33.56C-6.20 -29.13 -7.50 -16.96 0 -11.42z" transform="translate(590.5 344.2) rotate(303.75)"/><path d="M0 -11.42C7.50 -16.96 6.20 -29.13 0 -33.56C-6.20 -29.13 -7.50 -16.96 0 -11.42z" transform="translate(590.5 344.2) rotate(326.25)"/><path d="M0 -11.42C7.50 -16.96 6.20 -29.13 0 -33.56C-6.20 -29.13 -7.50 -16.96 0 -11.42z" transform="translate(590.5 344.2) rotate(348.75)"/></g><g fill="#000" stroke="#000" stroke-width="6.6" stroke-linejoin="round"><path d="M0 -11.42C7.23 -17.49 5.98 -30.84 0 -35.70C-5.98 -30.84 -7.23 -17.49 0 -11.42z" transform="translate(590.5 344.2) rotate(0.00)"/><path d="M0 -11.42C7.23 -17.49 5.98 -30.84 0 -35.70C-5.98 -30.84 -7.23 -17.49 0 -11.42z" transform="translate(590.5 344.2) rotate(22.50)"/><path d="M0 -11.42C7.23 -17.49 5.98 -30.84 0 -35.70C-5.98 -30.84 -7.23 -17.49 0 -11.42z" transform="translate(590.5 344.2) rotate(45.00)"/><path d="M0 -11.42C7.23 -17.49 5.98 -30.84 0 -35.70C-5.98 -30.84 -7.23 -17.49 0 -11.42z" transform="translate(590.5 344.2) rotate(67.50)"/><path d="M0 -11.42C7.23 -17.49 5.98 -30.84 0 -35.70C-5.98 -30.84 -7.23 -17.49 0 -11.42z" transform="translate(590.5 344.2) rotate(90.00)"/><path d="M0 -11.42C7.23 -17.49 5.98 -30.84 0 -35.70C-5.98 -30.84 -7.23 -17.49 0 -11.42z" transform="translate(590.5 344.2) rotate(112.50)"/><path d="M0 -11.42C7.23 -17.49 5.98 -30.84 0 -35.70C-5.98 -30.84 -7.23 -17.49 0 -11.42z" transform="translate(590.5 344.2) rotate(135.00)"/><path d="M0 -11.42C7.23 -17.49 5.98 -30.84 0 -35.70C-5.98 -30.84 -7.23 -17.49 0 -11.42z" transform="translate(590.5 344.2) rotate(157.50)"/><path d="M0 -11.42C7.23 -17.49 5.98 -30.84 0 -35.70C-5.98 -30.84 -7.23 -17.49 0 -11.42z" transform="translate(590.5 344.2) rotate(180.00)"/><path d="M0 -11.42C7.23 -17.49 5.98 -30.84 0 -35.70C-5.98 -30.84 -7.23 -17.49 0 -11.42z" transform="translate(590.5 344.2) rotate(202.50)"/><path d="M0 -11.42C7.23 -17.49 5.98 -30.84 0 -35.70C-5.98 -30.84 -7.23 -17.49 0 -11.42z" transform="translate(590.5 344.2) rotate(225.00)"/><path d="M0 -11.42C7.23 -17.49 5.98 -30.84 0 -35.70C-5.98 -30.84 -7.23 -17.49 0 -11.42z" transform="translate(590.5 344.2) rotate(247.50)"/><path d="M0 -11.42C7.23 -17.49 5.98 -30.84 0 -35.70C-5.98 -30.84 -7.23 -17.49 0 -11.42z" transform="translate(590.5 344.2) rotate(270.00)"/><path d="M0 -11.42C7.23 -17.49 5.98 -30.84 0 -35.70C-5.98 -30.84 -7.23 -17.49 0 -11.42z" transform="translate(590.5 344.2) rotate(292.50)"/><path d="M0 -11.42C7.23 -17.49 5.98 -30.84 0 -35.70C-5.98 -30.84 -7.23 -17.49 0 -11.42z" transform="translate(590.5 344.2) rotate(315.00)"/><path d="M0 -11.42C7.23 -17.49 5.98 -30.84 0 -35.70C-5.98 -30.84 -7.23 -17.49 0 -11.42z" transform="translate(590.5 344.2) rotate(337.50)"/></g><circle cx="590.5" cy="344.2" r="25.70" fill="#000"/><circle cx="590.5" cy="344.2" r="21.42" fill="#f58ea5"/><g fill="#f797ab" stroke="#ec6c88" stroke-width="1.0" stroke-linejoin="round"><path d="M0 -11.42C7.50 -16.96 6.20 -29.13 0 -33.56C-6.20 -29.13 -7.50 -16.96 0 -11.42z" transform="translate(590.5 344.2) rotate(11.25)"/><path d="M0 -11.42C7.50 -16.96 6.20 -29.13 0 -33.56C-6.20 -29.13 -7.50 -16.96 0 -11.42z" transform="translate(590.5 344.2) rotate(33.75)"/><path d="M0 -11.42C7.50 -16.96 6.20 -29.13 0 -33.56C-6.20 -29.13 -7.50 -16.96 0 -11.42z" transform="translate(590.5 344.2) rotate(56.25)"/><path d="M0 -11.42C7.50 -16.96 6.20 -29.13 0 -33.56C-6.20 -29.13 -7.50 -16.96 0 -11.42z" transform="translate(590.5 344.2) rotate(78.75)"/><path d="M0 -11.42C7.50 -16.96 6.20 -29.13 0 -33.56C-6.20 -29.13 -7.50 -16.96 0 -11.42z" transform="translate(590.5 344.2) rotate(101.25)"/><path d="M0 -11.42C7.50 -16.96 6.20 -29.13 0 -33.56C-6.20 -29.13 -7.50 -16.96 0 -11.42z" transform="translate(590.5 344.2) rotate(123.75)"/><path d="M0 -11.42C7.50 -16.96 6.20 -29.13 0 -33.56C-6.20 -29.13 -7.50 -16.96 0 -11.42z" transform="translate(590.5 344.2) rotate(146.25)"/><path d="M0 -11.42C7.50 -16.96 6.20 -29.13 0 -33.56C-6.20 -29.13 -7.50 -16.96 0 -11.42z" transform="translate(590.5 344.2) rotate(168.75)"/><path d="M0 -11.42C7.50 -16.96 6.20 -29.13 0 -33.56C-6.20 -29.13 -7.50 -16.96 0 -11.42z" transform="translate(590.5 344.2) rotate(191.25)"/><path d="M0 -11.42C7.50 -16.96 6.20 -29.13 0 -33.56C-6.20 -29.13 -7.50 -16.96 0 -11.42z" transform="translate(590.5 344.2) rotate(213.75)"/><path d="M0 -11.42C7.50 -16.96 6.20 -29.13 0 -33.56C-6.20 -29.13 -7.50 -16.96 0 -11.42z" transform="translate(590.5 344.2) rotate(236.25)"/><path d="M0 -11.42C7.50 -16.96 6.20 -29.13 0 -33.56C-6.20 -29.13 -7.50 -16.96 0 -11.42z" transform="translate(590.5 344.2) rotate(258.75)"/><path d="M0 -11.42C7.50 -16.96 6.20 -29.13 0 -33.56C-6.20 -29.13 -7.50 -16.96 0 -11.42z" transform="translate(590.5 344.2) rotate(281.25)"/><path d="M0 -11.42C7.50 -16.96 6.20 -29.13 0 -33.56C-6.20 -29.13 -7.50 -16.96 0 -11.42z" transform="translate(590.5 344.2) rotate(303.75)"/><path d="M0 -11.42C7.50 -16.96 6.20 -29.13 0 -33.56C-6.20 -29.13 -7.50 -16.96 0 -11.42z" transform="translate(590.5 344.2) rotate(326.25)"/><path d="M0 -11.42C7.50 -16.96 6.20 -29.13 0 -33.56C-6.20 -29.13 -7.50 -16.96 0 -11.42z" transform="translate(590.5 344.2) rotate(348.75)"/></g><g fill="#fdc0ca" stroke="#ec6c88" stroke-width="1.1" stroke-linejoin="round"><path d="M0 -11.42C7.23 -17.49 5.98 -30.84 0 -35.70C-5.98 -30.84 -7.23 -17.49 0 -11.42z" transform="translate(590.5 344.2) rotate(0.00)"/><path d="M0 -11.42C7.23 -17.49 5.98 -30.84 0 -35.70C-5.98 -30.84 -7.23 -17.49 0 -11.42z" transform="translate(590.5 344.2) rotate(22.50)"/><path d="M0 -11.42C7.23 -17.49 5.98 -30.84 0 -35.70C-5.98 -30.84 -7.23 -17.49 0 -11.42z" transform="translate(590.5 344.2) rotate(45.00)"/><path d="M0 -11.42C7.23 -17.49 5.98 -30.84 0 -35.70C-5.98 -30.84 -7.23 -17.49 0 -11.42z" transform="translate(590.5 344.2) rotate(67.50)"/><path d="M0 -11.42C7.23 -17.49 5.98 -30.84 0 -35.70C-5.98 -30.84 -7.23 -17.49 0 -11.42z" transform="translate(590.5 344.2) rotate(90.00)"/><path d="M0 -11.42C7.23 -17.49 5.98 -30.84 0 -35.70C-5.98 -30.84 -7.23 -17.49 0 -11.42z" transform="translate(590.5 344.2) rotate(112.50)"/><path d="M0 -11.42C7.23 -17.49 5.98 -30.84 0 -35.70C-5.98 -30.84 -7.23 -17.49 0 -11.42z" transform="translate(590.5 344.2) rotate(135.00)"/><path d="M0 -11.42C7.23 -17.49 5.98 -30.84 0 -35.70C-5.98 -30.84 -7.23 -17.49 0 -11.42z" transform="translate(590.5 344.2) rotate(157.50)"/><path d="M0 -11.42C7.23 -17.49 5.98 -30.84 0 -35.70C-5.98 -30.84 -7.23 -17.49 0 -11.42z" transform="translate(590.5 344.2) rotate(180.00)"/><path d="M0 -11.42C7.23 -17.49 5.98 -30.84 0 -35.70C-5.98 -30.84 -7.23 -17.49 0 -11.42z" transform="translate(590.5 344.2) rotate(202.50)"/><path d="M0 -11.42C7.23 -17.49 5.98 -30.84 0 -35.70C-5.98 -30.84 -7.23 -17.49 0 -11.42z" transform="translate(590.5 344.2) rotate(225.00)"/><path d="M0 -11.42C7.23 -17.49 5.98 -30.84 0 -35.70C-5.98 -30.84 -7.23 -17.49 0 -11.42z" transform="translate(590.5 344.2) rotate(247.50)"/><path d="M0 -11.42C7.23 -17.49 5.98 -30.84 0 -35.70C-5.98 -30.84 -7.23 -17.49 0 -11.42z" transform="translate(590.5 344.2) rotate(270.00)"/><path d="M0 -11.42C7.23 -17.49 5.98 -30.84 0 -35.70C-5.98 -30.84 -7.23 -17.49 0 -11.42z" transform="translate(590.5 344.2) rotate(292.50)"/><path d="M0 -11.42C7.23 -17.49 5.98 -30.84 0 -35.70C-5.98 -30.84 -7.23 -17.49 0 -11.42z" transform="translate(590.5 344.2) rotate(315.00)"/><path d="M0 -11.42C7.23 -17.49 5.98 -30.84 0 -35.70C-5.98 -30.84 -7.23 -17.49 0 -11.42z" transform="translate(590.5 344.2) rotate(337.50)"/></g><circle cx="590.5" cy="344.2" r="14.64" fill="#d9a762" stroke="#c58e47" stroke-width="1"/><circle cx="590.5" cy="344.2" r="6.60" fill="#e6c781" stroke="#cfa052" stroke-width=".9"/><rect x="650" y="315.7" width="21.5" height="5.7" fill="#000"/><rect x="717.4" y="315.7" width="21.100000000000023" height="5.7" fill="#000"/><path d="M687.2 316.7Q694.5 310.0 701.7 316.7" fill="none" stroke="#000" stroke-width="2.45"/><circle cx="671.5" cy="322.4" r="15.70" fill="url(#lg1)" stroke="#000" stroke-width="3.4"/><circle cx="717.4" cy="322.4" r="15.70" fill="url(#rg1)" stroke="#000" stroke-width="3.4"/><clipPath id="cp671322"><circle cx="671.5" cy="322.4" r="14.30"/></clipPath><g clip-path="url(#cp671322)"><rect x="657.2" y="317.30" width="28.60" height="3.50" fill="#000"/><rect x="657.2" y="323.10" width="28.60" height="3.50" fill="#000"/><rect x="657.2" y="328.90" width="28.60" height="3.50" fill="#000"/><rect x="657.2" y="334.70" width="28.60" height="3.50" fill="#000"/></g><rect x="757" y="315.7" width="21.299999999999955" height="5.7" fill="#000"/><rect x="824.5" y="315.7" width="20.5" height="5.7" fill="#000"/><path d="M793.8 316.7Q801.4 310.2 809.0 316.7" fill="none" stroke="#000" stroke-width="2.45"/><circle cx="778.3" cy="322.4" r="15.50" fill="url(#lgL)" stroke="#000" stroke-width="3.4"/><circle cx="824.5" cy="322.4" r="15.50" fill="url(#rgL)" stroke="#000" stroke-width="3.4"/><clipPath id="cp778322"><circle cx="778.3" cy="322.4" r="14.10"/></clipPath><g clip-path="url(#cp778322)"><rect x="764.1999999999999" y="320.00" width="28.20" height="3.10" fill="#000"/><rect x="764.1999999999999" y="326.00" width="28.20" height="3.10" fill="#000"/><rect x="764.1999999999999" y="332.00" width="28.20" height="3.10" fill="#000"/></g><rect x="650" y="360.3" width="21.5" height="5.7" fill="#000"/><rect x="717.4" y="360.3" width="21.100000000000023" height="5.7" fill="#000"/><path d="M687.2 361.2Q694.5 354.5 701.7 361.2" fill="none" stroke="#000" stroke-width="2.45"/><circle cx="671.5" cy="366.9" r="15.70" fill="url(#lgP)" stroke="#000" stroke-width="3.4"/><circle cx="717.4" cy="366.9" r="15.70" fill="url(#rgP)" stroke="#000" stroke-width="3.4"/><clipPath id="cp671366"><circle cx="671.5" cy="366.9" r="14.30"/></clipPath><g clip-path="url(#cp671366)"><rect x="657.2" y="364.90" width="28.60" height="3.30" fill="#000"/><rect x="657.2" y="374.70" width="28.60" height="3.30" fill="#000"/></g><rect x="757" y="360.3" width="21.299999999999955" height="5.7" fill="#000"/><rect x="824.5" y="360.3" width="20.5" height="5.7" fill="#000"/><path d="M793.8 361.1Q801.4 354.6 809.0 361.1" fill="none" stroke="#000" stroke-width="2.45"/><circle cx="778.3" cy="366.8" r="15.50" fill="url(#lgB)" stroke="#000" stroke-width="3.4"/><circle cx="824.5" cy="366.8" r="15.50" fill="url(#rgB)" stroke="#000" stroke-width="3.4"/><clipPath id="cp778366"><circle cx="778.3" cy="366.8" r="14.10"/></clipPath><g clip-path="url(#cp778366)"><rect x="764.1999999999999" y="365.30" width="28.20" height="1.70" fill="#000"/></g><rect x="547.400" y="451.700" width="66.100" height="66.500" fill="#b9b7b7"/><rect x="541.900" y="448.600" width="65.300" height="65.200" fill="#c3e2f4"/><rect x="541.900" y="448.600" width="65.300" height="65.200" fill="url(#grid3)"/><circle cx="574.500" cy="481.200" r="32.300" fill="url(#rgC)" stroke="#1a1a1a" stroke-width="1.300"/><rect x="541.900" y="448.600" width="65.300" height="65.200" fill="none" stroke="#111" stroke-width="1.600"/><path d="M556.400 465.200A23.100 23.100 0 0 1 592.700 465.200" fill="none" stroke="#111" stroke-width="1.500" stroke-dasharray="9.500 2.800 2.200 2.800" stroke-linecap="round"/><path d="M556.400 497.200A23.100 23.100 0 0 0 592.700 497.200" fill="none" stroke="#111" stroke-width="1.500" stroke-dasharray="9.500 2.800 2.200 2.800" stroke-linecap="round"/><rect x="546" y="477.3" width="14.200000000000045" height="3" fill="#000"/><rect x="589.6" y="477.3" width="13.699999999999932" height="3" fill="#000"/><path d="M569.9 477.6Q574.9 473.5 579.9 477.6" fill="none" stroke="#000" stroke-width="1.58"/><circle cx="560.2" cy="481.2" r="9.70" fill="url(#lg1)" stroke="#000" stroke-width="2.2"/><circle cx="589.6" cy="481.2" r="9.70" fill="url(#rg1)" stroke="#000" stroke-width="2.2"/><clipPath id="cp560481"><circle cx="560.2" cy="481.2" r="8.90"/></clipPath><g clip-path="url(#cp560481)"><rect x="551.3000000000001" y="479.20" width="17.80" height="2.00" fill="#000"/><rect x="551.3000000000001" y="482.60" width="17.80" height="2.00" fill="#000"/><rect x="551.3000000000001" y="486.00" width="17.80" height="2.00" fill="#000"/><rect x="551.3000000000001" y="489.40" width="17.80" height="2.00" fill="#000"/></g><path d="M589.6 476.2Q590.8100000000001 480.49 595.1 481.7Q590.8100000000001 482.90999999999997 589.6 487.2Q588.39 482.90999999999997 584.1 481.7Q588.39 480.49 589.6 476.2z" fill="#fff"/></svg>
<span class="t" style="left:141px;top:275.29px;font-size:11px;line-height:11px;color:#1c9ae0;transform-origin:0 0;transform:scaleX(1.0164);text-shadow:0 0 .4px #1c9ae0;">Страница 1</span>
<span class="t" style="left:542.5px;top:275.29px;font-size:11px;line-height:11px;color:#a6a6a6;transform-origin:0 0;transform:scaleX(1.0164);">Страница 2</span>
<span class="t" style="left:541.5px;top:436.09px;font-size:11px;line-height:11px;color:#a6a6a6;transform-origin:0 0;transform:scaleX(1.0164);">Страница 3</span>
<div class="a" style="left:967px;top:113px;width:289px;height:21px;background:#ebebeb;"></div>
<div class="a" style="left:967px;top:134px;width:289px;height:1px;background:#c9c9c9;"></div>
<div class="a" style="left:967px;top:135px;width:269px;height:73px;background:#f4f4f4;"></div>
<div class="a" style="left:967px;top:208px;width:269px;height:577px;background:#fff;"></div>
<div class="a" style="left:967px;top:785px;width:269px;height:28px;background:#f4f4f4;"></div>
<div class="a" style="left:1236px;top:135px;width:1px;height:678px;background:#e4e4e4;"></div>
<span class="t" style="left:972px;top:117.84px;font-size:12px;line-height:12px;color:#1a1a1a;transform-origin:0 0;transform:scaleX(0.9506);">Обучения</span>
<svg class="a" style="left:1225px;top:119px;" width="10" height="9" viewBox="0 0 10 9"><path d="M0 0v9l4.500-4.500zM5 0v9l4.500-4.500z" fill="#b5b5b5"/></svg>
<svg class="a" style="left:1241px;top:119px;" width="9" height="9" viewBox="0 0 9 9"><path d="M.5 .5l8 8M8.500 .5l-8 8" stroke="#a8a8a8" stroke-width="1.200"/></svg>
<div class="a" style="left:976px;top:144px;width:22px;height:22px;background:#fff;border:1px solid #bdbdbd;box-sizing:border-box;"></div>
<svg class="a" style="left:979px;top:147px;" width="16" height="16" viewBox="0 0 16 16"><path d="M1 1.500v11l2.600-2.400 1.900 4.300 1.700-.8-1.900-4.200 3.400-.2z" fill="#1d1d1d"/></svg>
<span class="t" style="left:987.500px;top:145px;font-size:13px;line-height:13px;color:#1d1d1d;">?</span>
<span class="t" style="left:976px;top:178.84px;font-size:12px;line-height:12px;color:#1a1a1a;transform-origin:0 0;transform:scaleX(0.9051);">Советы</span>
<span class="t" style="left:978px;top:222.57px;font-size:13.5px;line-height:13.5px;color:#2a2a2a;transform-origin:0 0;transform:scaleX(0.9563);">Выделение объектов</span>
<svg class="a" style="left:982px;top:249px;" width="10" height="17" viewBox="0 0 10 17"><path d="M.5 .5v13l3-2.800 2.300 5.300 2-.9-2.300-5.100 4-.2z" fill="#c6c6c6"/></svg>
<span class="t" style="left:1000px;top:251.69px;font-size:11px;line-height:11px;color:#111;font-weight:bold;transform-origin:0 0;transform:scaleX(0.9109);">Указатель</span>
<div class="a" style="left:978px;top:285.1px;width:3px;height:3px;border-radius:50%;background:#333"></div>
<span class="t" style="left:987px;top:281.41px;font-size:10.5px;line-height:10.5px;color:#2e2e2e;transform-origin:0 0;transform:scaleX(0.9650);">Чтобы выбрать объект, щелкните его.</span>
<span class="t" style="left:987px;top:296.61px;font-size:10.5px;line-height:10.5px;color:#2e2e2e;transform-origin:0 0;transform:scaleX(0.9679);">Удерживайте нажатой клавишу <b>Alt</b>, чтобы</span>
<span class="t" style="left:987px;top:311.91px;font-size:10.5px;line-height:10.5px;color:#2e2e2e;transform-origin:0 0;transform:scaleX(0.9671);">выбрать объект, который находится за другим</span>
<span class="t" style="left:987px;top:327.11px;font-size:10.5px;line-height:10.5px;color:#2e2e2e;transform-origin:0 0;transform:scaleX(0.9610);">объектом, или клавишу <b>Ctrl</b>, чтобы выбрать</span>
<span class="t" style="left:987px;top:342.31px;font-size:10.5px;line-height:10.5px;color:#2e2e2e;transform-origin:0 0;transform:scaleX(0.9777);">объект в группе.</span>
<span class="t" style="left:987px;top:363.11px;font-size:10.5px;line-height:10.5px;color:#2e2e2e;transform-origin:0 0;transform:scaleX(0.9659);">Чтобы выбрать несколько объектов, щелкните</span>
<span class="t" style="left:987px;top:378.31px;font-size:10.5px;line-height:10.5px;color:#2e2e2e;transform-origin:0 0;transform:scaleX(0.9748);">каждый объект, удерживая нажатой клавишу</span>
<span class="t" style="left:987px;top:393.61px;font-size:10.5px;line-height:10.5px;color:#2e2e2e;transform-origin:0 0;transform:scaleX(0.9526);"><b>Shift</b>, или перетащите указатель для образования</span>
<span class="t" style="left:987px;top:408.71px;font-size:10.5px;line-height:10.5px;color:#2e2e2e;transform-origin:0 0;transform:scaleX(0.9801);">выделяющей рамки вокруг объектов.</span>
<span class="t" style="left:987px;top:428.71px;font-size:10.5px;line-height:10.5px;color:#2e2e2e;transform-origin:0 0;transform:scaleX(0.9554);">Чтобы выбрать все объекты, дважды щелкните</span>
<span class="t" style="left:987px;top:443.91px;font-size:10.5px;line-height:10.5px;color:#2e2e2e;transform-origin:0 0;transform:scaleX(0.9325);"><b>указатель</b>.</span>
<div class="a" style="left:978px;top:366.8px;width:3px;height:3px;border-radius:50%;background:#333"></div>
<div class="a" style="left:978px;top:432.40000000000003px;width:3px;height:3px;border-radius:50%;background:#333"></div>
<div class="a" style="left:978px;top:471px;width:250px;height:1px;background:#c8c8c8;"></div>
<span class="t" style="left:978px;top:483.07px;font-size:13.5px;line-height:13.5px;color:#2a2a2a;transform-origin:0 0;transform:scaleX(0.9712);">Подробнее</span>
<svg class="a" style="left:983px;top:511px;" width="20" height="20" viewBox="0 0 20 20"><circle cx="10" cy="10" r="8.600" fill="none" stroke="#d2d2d2" stroke-width="1.200"/><rect x="9.200" y="8.500" width="1.800" height="6" fill="#d2d2d2"/><circle cx="10.100" cy="6" r="1.100" fill="#d2d2d2"/></svg>
<span class="t" style="left:1033px;top:515.14px;font-size:12px;line-height:12px;color:#1a1a1a;transform-origin:0 0;transform:scaleX(0.9980);">Раздел справки</span>
<span class="t" style="left:1033px;top:533.91px;font-size:10.5px;line-height:10.5px;color:#4a8fd8;transform-origin:0 0;transform:scaleX(0.9778);">Выделение объектов</span>
<svg class="a" style="left:983px;top:561px;" width="20" height="20" viewBox="0 0 20 20"><circle cx="10" cy="10" r="8.600" fill="none" stroke="#d2d2d2" stroke-width="1.200"/><path d="M7.800 6.200v7.600l6-3.800z" fill="#d2d2d2"/></svg>
<span class="t" style="left:1033px;top:565.04px;font-size:12px;line-height:12px;color:#1a1a1a;transform-origin:0 0;transform:scaleX(1.0119);">Webinar</span>
<span class="t" style="left:1033px;top:583.11px;font-size:10.5px;line-height:10.5px;color:#4a8fd8;transform-origin:0 0;transform:scaleX(0.9681);">Работа с кривыми (для</span>
<span class="t" style="left:1033px;top:598.81px;font-size:10.5px;line-height:10.5px;color:#4a8fd8;transform-origin:0 0;transform:scaleX(0.9767);">непрофессиональных графических</span>
<span class="t" style="left:1033px;top:614.71px;font-size:10.5px;line-height:10.5px;color:#4a8fd8;transform-origin:0 0;transform:scaleX(0.9859);">дизайнеров)<span style="color:#2e2e2e">, автор Ананд Диксит</span></span>
<span class="t" style="left:1033px;top:630.11px;font-size:10.5px;line-height:10.5px;color:#2e2e2e;transform-origin:0 0;transform:scaleX(0.9719);">(Anand Dixit)</span>
<div class="a" style="left:978px;top:663px;width:250px;height:1px;background:#c8c8c8;"></div>
<span class="t" style="left:1035.5px;top:675.71px;font-size:10.5px;line-height:10.5px;color:#111;font-weight:bold;transform-origin:0 0;transform:scaleX(0.9547);">Ваш голос имеет значение</span>
<span class="t" style="left:990.6px;top:691.91px;font-size:10.5px;line-height:10.5px;color:#4a8fd8;font-style:italic;transform-origin:0 0;transform:scaleX(0.9742);">Поделитесь своими идеями и предложениями</span>
<span class="t" style="left:1028px;top:707.51px;font-size:10.5px;line-height:10.5px;color:#4a8fd8;font-style:italic;transform-origin:0 0;transform:scaleX(0.9622);">(только на английском языке).</span>
<svg class="a" style="left:971px;top:793px;" width="16" height="16" viewBox="0 0 16 16"><path d="M.8 7.500L4.500 1h7L15 7.500" fill="none" stroke="#1d1d1d" stroke-width="1.200"/><path d="M2.500 7.500v7.700h10.500V7.500H1" fill="none" stroke="#1d1d1d" stroke-width="1.200"/></svg>
<svg class="a" style="left:1190px;top:793px;" width="16" height="16" viewBox="0 0 16 16"><path d="M.9 8L7 1.500V5.200h8v5.600H7V14.500z" fill="none" stroke="#1d1d1d" stroke-width="1.200"/></svg>
<svg class="a" style="left:1216px;top:793px;" width="16" height="16" viewBox="0 0 16 16"><path d="M15.100 8L9 1.500V5.200H1v5.600h8V14.500z" fill="none" stroke="#c4c4c4" stroke-width="1.200"/></svg>
<div class="a" style="left:1237px;top:135px;width:19px;height:678px;background:#ececec;"></div>
<div class="a" style="left:1237px;top:135px;width:19px;height:93px;background:#a8a8a8;"></div>
<div class="a" style="left:1237px;top:228px;width:19px;height:186px;background:#d9d9d9;"></div>
<div class="a" style="left:1237px;top:320px;width:19px;height:1px;background:#e8e8e8;"></div>
<span class="t" style="left:1241.8px;top:159.5px;font-size:12px;line-height:12px;color:#1a1a1a;transform-origin:0 0;transform:rotate(90deg) scaleX(0.9049) translateY(-84.65%);">Обучения</span>
<span class="t" style="left:1241.8px;top:253px;font-size:12px;line-height:12px;color:#1a1a1a;transform-origin:0 0;transform:rotate(90deg) scaleX(0.8918) translateY(-84.65%);">Свойства</span>
<span class="t" style="left:1241.8px;top:348px;font-size:12px;line-height:12px;color:#1a1a1a;transform-origin:0 0;transform:rotate(90deg) scaleX(0.8687) translateY(-84.65%);">Объекты</span>
<svg class="a" style="left:1239px;top:137px;" width="15" height="15" viewBox="0 0 15 15"><path d="M7.500 1L14 4 7.500 7 1 4z" fill="#1d1d1d"/><path d="M2.500 5.800v5.400l5 2.800 5-2.800V5.800l-5 2.400z" fill="#1d1d1d"/><path d="M8.500 8.800h3v3h-3z" fill="#a8a8a8"/></svg>
<svg class="a" style="left:1238px;top:231px;" width="17" height="17" viewBox="0 0 17 17"><path d="M6.500 3l5 5-5 5-5-5z" fill="#fff" stroke="#1d1d1d" stroke-width="1.300"/><path d="M3.300 8.800h6.400L6.500 12.300z" fill="#e8761d"/><path d="M12 9v5M14.500 9v5" stroke="#1d1d1d" stroke-width="1.300"/><circle cx="13" cy="15.500" r="1" fill="#1d1d1d"/></svg>
<svg class="a" style="left:1239px;top:324px;" width="16" height="17" viewBox="0 0 16 17"><path d="M8 1l7 4-7 4-7-4z" fill="#d9d9d9" stroke="#1d1d1d" stroke-width="1.200"/><path d="M1.500 8.500L8 12.200l6.500-3.700M1.500 11.500L8 15.200l6.500-3.700" fill="none" stroke="#1d1d1d" stroke-width="1.200"/></svg>
<svg class="a" style="left:1241px;top:419px;" width="12" height="12" viewBox="0 0 12 12"><path d="M6 0v12M0 6h12" stroke="#b8b8b8" stroke-width="1.600"/></svg>
<div class="a" style="left:1256px;top:113px;width:19px;height:700px;background:#f4f4f4;"></div>
<svg class="a" style="left:1258px;top:115px;" width="17" height="6" viewBox="0 0 17 6"><rect x="0" y="0" width="1" height="1" fill="#b8b8b8"/><rect x="2" y="0" width="1" height="1" fill="#b8b8b8"/><rect x="4" y="0" width="1" height="1" fill="#b8b8b8"/><rect x="6" y="0" width="1" height="1" fill="#b8b8b8"/><rect x="8" y="0" width="1" height="1" fill="#b8b8b8"/><rect x="10" y="0" width="1" height="1" fill="#b8b8b8"/><rect x="12" y="0" width="1" height="1" fill="#b8b8b8"/><rect x="14" y="0" width="1" height="1" fill="#b8b8b8"/><rect x="1" y="2" width="1" height="1" fill="#b8b8b8"/><rect x="3" y="2" width="1" height="1" fill="#b8b8b8"/><rect x="5" y="2" width="1" height="1" fill="#b8b8b8"/><rect x="7" y="2" width="1" height="1" fill="#b8b8b8"/><rect x="9" y="2" width="1" height="1" fill="#b8b8b8"/><rect x="11" y="2" width="1" height="1" fill="#b8b8b8"/><rect x="13" y="2" width="1" height="1" fill="#b8b8b8"/><rect x="15" y="2" width="1" height="1" fill="#b8b8b8"/><rect x="0" y="4" width="1" height="1" fill="#b8b8b8"/><rect x="2" y="4" width="1" height="1" fill="#b8b8b8"/><rect x="4" y="4" width="1" height="1" fill="#b8b8b8"/><rect x="6" y="4" width="1" height="1" fill="#b8b8b8"/><rect x="8" y="4" width="1" height="1" fill="#b8b8b8"/><rect x="10" y="4" width="1" height="1" fill="#b8b8b8"/><rect x="12" y="4" width="1" height="1" fill="#b8b8b8"/><rect x="14" y="4" width="1" height="1" fill="#b8b8b8"/></svg>
<svg class="a" style="left:1264px;top:124px;" width="5" height="8" viewBox="0 0 5 8"><path d="M0 0v8L4.500 4z" fill="#666"/></svg>
<svg class="a" style="left:1259px;top:141px;" width="15" height="15" viewBox="0 0 17 17"><path d="M2 15.500l-.8-.8L9 7l1.500 1.500z" fill="#fff" stroke="#b5b5b5" stroke-width="1.100"/><path d="M1 16l.3-2.200L4.500 10.500l1.500 1.500L3 15.500z" fill="#c8c8c8"/><path d="M8.500 5l1.500-1.500 1 1L13.500 2a1.800 1.800 0 0 1 2.500 2.500L13.500 7l1 1L13 9.500z" fill="#b5b5b5"/></svg>
<svg class="a" style="left:1261px;top:161px;" width="11" height="7" viewBox="0 0 11 7"><path d="M1 6L5.500 1.500 10 6" fill="none" stroke="#cfcfcf" stroke-width="1.600"/></svg>
<svg class="a" style="left:1258px;top:173px;" width="16.5" height="602" viewBox="0 0 16.5 602"><rect x=".5" y="0.80" width="15.500" height="15.30" fill="#fff" stroke="#666"/><path d="M2.500 13.30L13.500 2.80" stroke="#e0504a" stroke-width="1.100"/><rect x="0" y="16.10" width="16.500" height="16.10" fill="#000000"/><rect x="0" y="16.10" width="16.500" height=".9" fill="#3c3c3c" opacity=".55"/><rect x="0" y="31.90" width="16.500" height="16.10" fill="#1a1a1a"/><rect x="0" y="31.90" width="16.500" height=".9" fill="#3c3c3c" opacity=".55"/><rect x="0" y="47.70" width="16.500" height="16.10" fill="#333333"/><rect x="0" y="47.70" width="16.500" height=".9" fill="#3c3c3c" opacity=".55"/><rect x="0" y="63.50" width="16.500" height="16.10" fill="#4d4d4d"/><rect x="0" y="63.50" width="16.500" height=".9" fill="#3c3c3c" opacity=".55"/><rect x="0" y="79.30" width="16.500" height="16.10" fill="#666666"/><rect x="0" y="79.30" width="16.500" height=".9" fill="#3c3c3c" opacity=".55"/><rect x="0" y="95.10" width="16.500" height="16.10" fill="#808080"/><rect x="0" y="95.10" width="16.500" height=".9" fill="#3c3c3c" opacity=".55"/><rect x="0" y="110.90" width="16.500" height="16.10" fill="#999999"/><rect x="0" y="110.90" width="16.500" height=".9" fill="#3c3c3c" opacity=".55"/><rect x="0" y="126.70" width="16.500" height="16.10" fill="#b3b3b3"/><rect x="0" y="126.70" width="16.500" height=".9" fill="#3c3c3c" opacity=".55"/><rect x="0" y="142.50" width="16.500" height="16.10" fill="#cccccc"/><rect x="0" y="142.50" width="16.500" height=".9" fill="#3c3c3c" opacity=".55"/><rect x="0" y="158.30" width="16.500" height="16.10" fill="#e6e6e6"/><rect x="0" y="158.30" width="16.500" height=".9" fill="#3c3c3c" opacity=".55"/><rect x="0" y="174.10" width="16.500" height="16.10" fill="#ffffff"/><rect x="0" y="174.10" width="16.500" height=".9" fill="#3c3c3c" opacity=".55"/><rect x="0" y="189.90" width="16.500" height="16.10" fill="#0000ff"/><rect x="0" y="189.90" width="16.500" height=".9" fill="#3c3c3c" opacity=".55"/><rect x="0" y="205.70" width="16.500" height="16.10" fill="#00ffff"/><rect x="0" y="205.70" width="16.500" height=".9" fill="#3c3c3c" opacity=".55"/><rect x="0" y="221.50" width="16.500" height="16.10" fill="#00ff00"/><rect x="0" y="221.50" width="16.500" height=".9" fill="#3c3c3c" opacity=".55"/><rect x="0" y="237.30" width="16.500" height="16.10" fill="#ffff00"/><rect x="0" y="237.30" width="16.500" height=".9" fill="#3c3c3c" opacity=".55"/><rect x="0" y="253.10" width="16.500" height="16.10" fill="#ff0000"/><rect x="0" y="253.10" width="16.500" height=".9" fill="#3c3c3c" opacity=".55"/><rect x="0" y="268.90" width="16.500" height="16.10" fill="#ff00ff"/><rect x="0" y="268.90" width="16.500" height=".9" fill="#3c3c3c" opacity=".55"/><rect x="0" y="284.70" width="16.500" height="16.10" fill="#9900cc"/><rect x="0" y="284.70" width="16.500" height=".9" fill="#3c3c3c" opacity=".55"/><rect x="0" y="300.50" width="16.500" height="16.10" fill="#ff6600"/><rect x="0" y="300.50" width="16.500" height=".9" fill="#3c3c3c" opacity=".55"/><rect x="0" y="316.30" width="16.500" height="16.10" fill="#ff99cc"/><rect x="0" y="316.30" width="16.500" height=".9" fill="#3c3c3c" opacity=".55"/><rect x="0" y="332.10" width="16.500" height="16.10" fill="#663333"/><rect x="0" y="332.10" width="16.500" height=".9" fill="#3c3c3c" opacity=".55"/><rect x="0" y="347.90" width="16.500" height="16.10" fill="#ccccff"/><rect x="0" y="347.90" width="16.500" height=".9" fill="#3c3c3c" opacity=".55"/><rect x="0" y="363.70" width="16.500" height="16.10" fill="#9999ff"/><rect x="0" y="363.70" width="16.500" height=".9" fill="#3c3c3c" opacity=".55"/><rect x="0" y="379.50" width="16.500" height="16.10" fill="#6699ff"/><rect x="0" y="379.50" width="16.500" height=".9" fill="#3c3c3c" opacity=".55"/><rect x="0" y="395.30" width="16.500" height="16.10" fill="#6666ff"/><rect x="0" y="395.30" width="16.500" height=".9" fill="#3c3c3c" opacity=".55"/><rect x="0" y="411.10" width="16.500" height="16.10" fill="#6666cc"/><rect x="0" y="411.10" width="16.500" height=".9" fill="#3c3c3c" opacity=".55"/><rect x="0" y="426.90" width="16.500" height="16.10" fill="#003399"/><rect x="0" y="426.90" width="16.500" height=".9" fill="#3c3c3c" opacity=".55"/><rect x="0" y="442.70" width="16.500" height="16.10" fill="#000066"/><rect x="0" y="442.70" width="16.500" height=".9" fill="#3c3c3c" opacity=".55"/><rect x="0" y="458.50" width="16.500" height="16.10" fill="#336699"/><rect x="0" y="458.50" width="16.500" height=".9" fill="#3c3c3c" opacity=".55"/><rect x="0" y="474.30" width="16.500" height="16.10" fill="#00ccff"/><rect x="0" y="474.30" width="16.500" height=".9" fill="#3c3c3c" opacity=".55"/><rect x="0" y="490.10" width="16.500" height="16.10" fill="#99ffff"/><rect x="0" y="490.10" width="16.500" height=".9" fill="#3c3c3c" opacity=".55"/><rect x="0" y="505.90" width="16.500" height="16.10" fill="#99cccc"/><rect x="0" y="505.90" width="16.500" height=".9" fill="#3c3c3c" opacity=".55"/><rect x="0" y="521.70" width="16.500" height="16.10" fill="#669999"/><rect x="0" y="521.70" width="16.500" height=".9" fill="#3c3c3c" opacity=".55"/><rect x="0" y="537.50" width="16.500" height="16.10" fill="#336666"/><rect x="0" y="537.50" width="16.500" height=".9" fill="#3c3c3c" opacity=".55"/><rect x="0" y="553.30" width="16.500" height="16.10" fill="#003333"/><rect x="0" y="553.30" width="16.500" height=".9" fill="#3c3c3c" opacity=".55"/><rect x="0" y="569.10" width="16.500" height="16.10" fill="#006633"/><rect x="0" y="569.10" width="16.500" height=".9" fill="#3c3c3c" opacity=".55"/><rect x="0" y="584.90" width="16.500" height="16.10" fill="#009933"/><rect x="0" y="584.90" width="16.500" height=".9" fill="#3c3c3c" opacity=".55"/><rect x="0" y="16.10" width=".7" height="584.60" fill="#3c3c3c" opacity=".45"/><rect x="15.800" y="16.10" width=".7" height="584.60" fill="#3c3c3c" opacity=".45"/><rect x="0" y="600.20" width="16.500" height=".8" fill="#3c3c3c" opacity=".5"/></svg>
<svg class="a" style="left:1261px;top:780px;" width="11" height="7" viewBox="0 0 11 7"><path d="M1 1L5.500 5.500 10 1" fill="none" stroke="#b0b0b0" stroke-width="1.600"/></svg>
<svg class="a" style="left:1262px;top:797px;" width="8" height="8" viewBox="0 0 8 8"><path d="M.5 .5l3 3.500-3 3.500M4.500 .5l3 3.500-3 3.500" fill="none" stroke="#b0b0b0" stroke-width="1.100"/></svg>
</body></html>
